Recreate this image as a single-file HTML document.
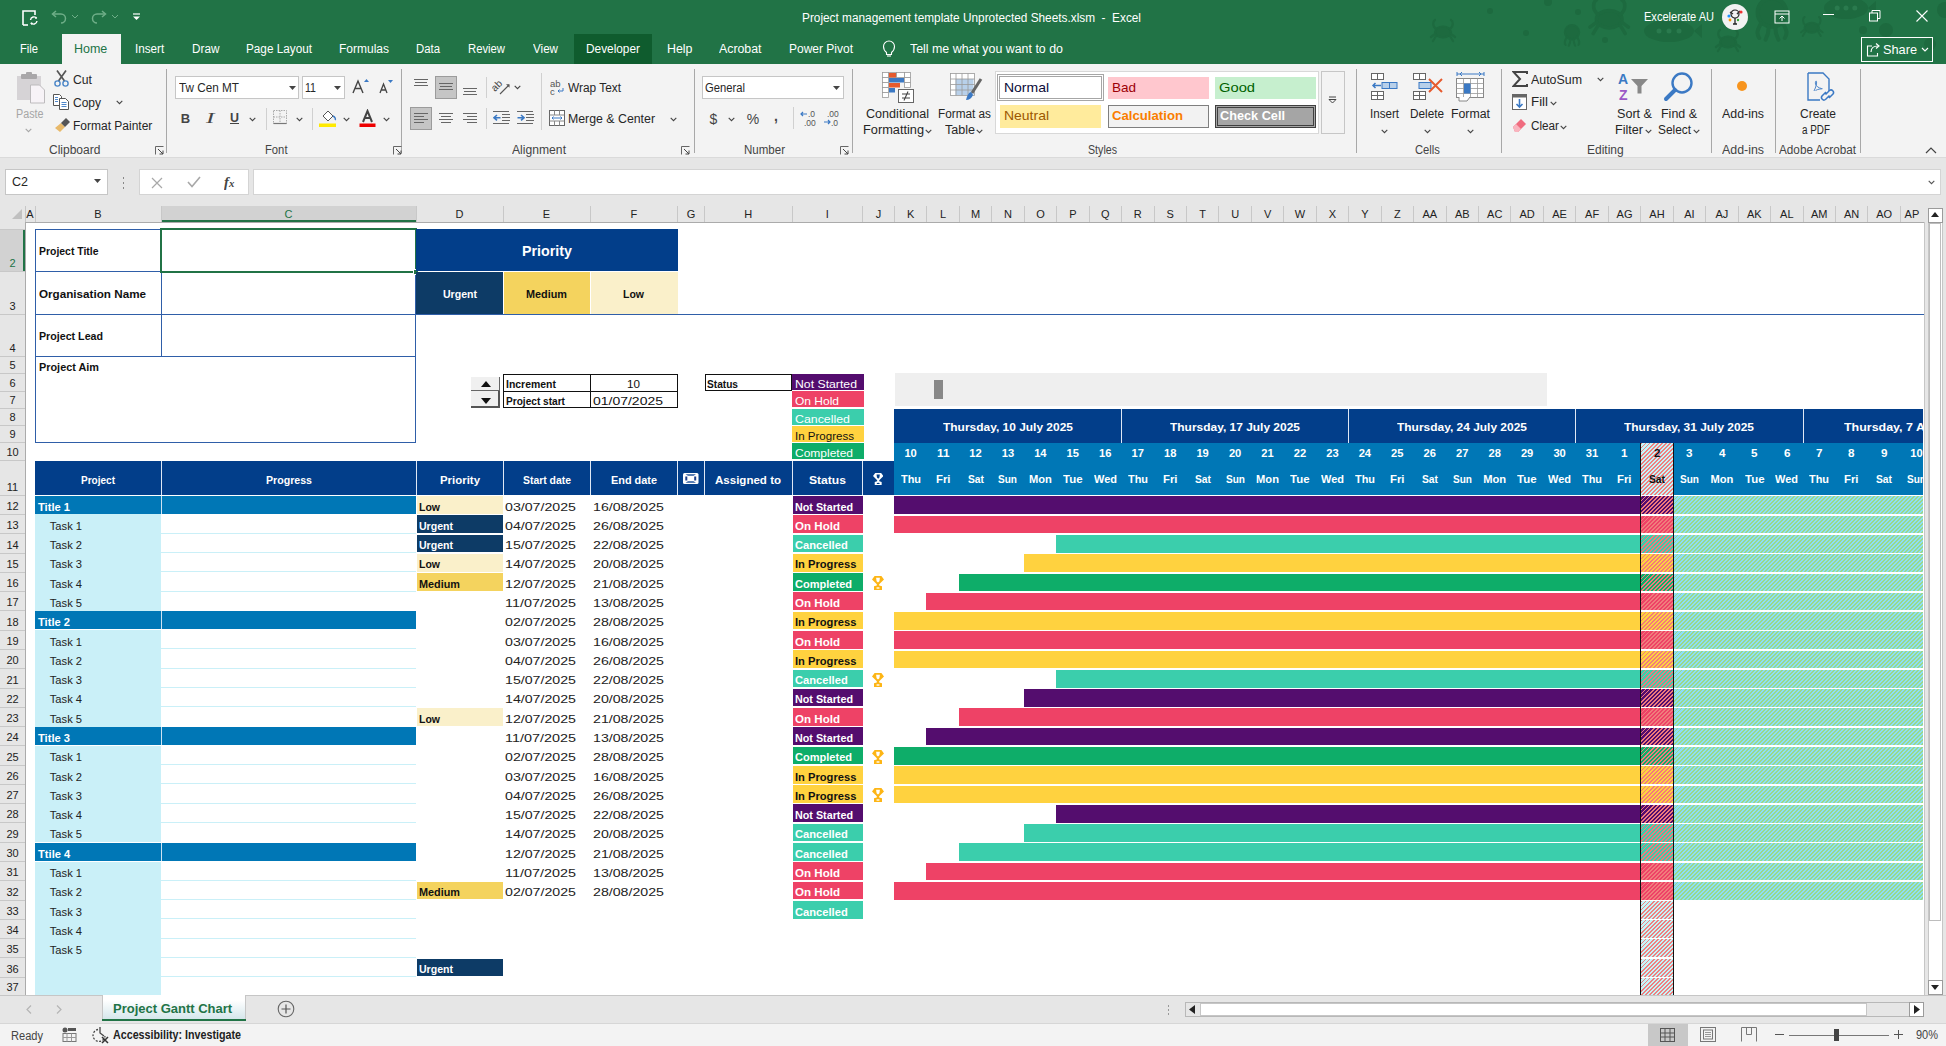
<!DOCTYPE html>
<html><head><meta charset="utf-8"><title>Excel</title><style>*{margin:0;padding:0}
html,body{width:1946px;height:1046px;overflow:hidden;background:#fff}
body{position:relative;font-family:"Liberation Sans",sans-serif}
body>div,body>svg{position:absolute}
.t{white-space:nowrap}
</style></head><body>
<div style="left:0.00px;top:0.00px;width:1946.00px;height:64.00px;background:#217346"></div>
<svg style="left:1400px;top:0px" width="546" height="64" viewBox="0 0 546 64"><g transform="translate(31,20) scale(1.0)" fill="none" stroke="#1d6a3f" stroke-width="2.2" stroke-linecap="round"><ellipse cx="12" cy="12" rx="8" ry="5.5" fill="#1d6a3f"/><path d="M5 9C1 6 2 1 4 0M19 9c4-3 3-8 1-9M4 14l-4 3M5 16l-3 5M20 14l4 3M19 16l3 5"/></g><g transform="translate(164,25) scale(0.8)" fill="#1d6a3f" stroke="#1d6a3f" stroke-width="2.5" stroke-linecap="round"><circle cx="10" cy="9" r="9"/><path d="M3 16c-2 4-3 6-1 9M8 18c0 3-1 6-2 8M12 18c0 3 1 6 2 8M17 16c2 4 3 6 1 9" fill="none"/></g><g transform="translate(190,0) scale(1.6)" fill="none" stroke="#1d6a3f" stroke-width="2.2" stroke-linecap="round"><ellipse cx="12" cy="12" rx="8" ry="5.5" fill="#1d6a3f"/><path d="M5 9C1 6 2 1 4 0M19 9c4-3 3-8 1-9M4 14l-4 3M5 16l-3 5M20 14l4 3M19 16l3 5"/></g><g><ellipse cx="269.0" cy="31.0" rx="25.0" ry="11.0" fill="#1d6a3f"/><circle cx="259.0" cy="31.0" r="2.5" fill="#2a7a4e"/><circle cx="269.0" cy="31.0" r="2.5" fill="#2a7a4e"/><circle cx="279.0" cy="31.0" r="2.5" fill="#2a7a4e"/><path d="M294 31.0l8-7v14z" fill="#1d6a3f"/></g><g transform="translate(356,-2) scale(1.6)" fill="#1d6a3f" stroke="#1d6a3f" stroke-width="2.5" stroke-linecap="round"><circle cx="10" cy="9" r="9"/><path d="M3 16c-2 4-3 6-1 9M8 18c0 3-1 6-2 8M12 18c0 3 1 6 2 8M17 16c2 4 3 6 1 9" fill="none"/></g><g transform="translate(316,30) scale(1.0)" fill="none" stroke="#1d6a3f" stroke-width="2.2" stroke-linecap="round"><ellipse cx="12" cy="12" rx="8" ry="5.5" fill="#1d6a3f"/><path d="M5 9C1 6 2 1 4 0M19 9c4-3 3-8 1-9M4 14l-4 3M5 16l-3 5M20 14l4 3M19 16l3 5"/></g><g transform="translate(401,17) scale(0.9)" fill="none" stroke="#1d6a3f" stroke-width="2.2" stroke-linecap="round"><ellipse cx="12" cy="12" rx="8" ry="5.5" fill="#1d6a3f"/><path d="M5 9C1 6 2 1 4 0M19 9c4-3 3-8 1-9M4 14l-4 3M5 16l-3 5M20 14l4 3M19 16l3 5"/></g><g><ellipse cx="446.0" cy="8.0" rx="22.0" ry="11.0" fill="#1d6a3f"/><circle cx="437.2" cy="8.0" r="2.5" fill="#2a7a4e"/><circle cx="446.0" cy="8.0" r="2.5" fill="#2a7a4e"/><circle cx="454.8" cy="8.0" r="2.5" fill="#2a7a4e"/><path d="M468 8.0l8-7v14z" fill="#1d6a3f"/></g><circle cx="90" cy="11" r="3" fill="#1d6a3f"/><circle cx="148" cy="2" r="4" fill="#1d6a3f"/><circle cx="126" cy="33" r="3" fill="#1d6a3f"/><circle cx="178" cy="12" r="3" fill="#1d6a3f"/><circle cx="463" cy="30" r="4" fill="#1d6a3f"/><circle cx="486" cy="30" r="7" fill="#1d6a3f"/><circle cx="530" cy="44" r="6" fill="#1d6a3f"/><circle cx="545" cy="10" r="8" fill="#1d6a3f"/><circle cx="205" cy="40" r="3" fill="#1d6a3f"/></svg>
<svg style="left:20px;top:8px" width="20" height="20" viewBox="0 0 20 20"><path d="M3 17V3h12v4" fill="none" stroke="#fff" stroke-width="1.6"/><path d="M3 17h5" stroke="#fff" stroke-width="1.6"/><path d="M10.5 12a3.5 3.5 0 0 1 6.2-1.8M17 13a3.5 3.5 0 0 1-6.2 1.8" fill="none" stroke="#fff" stroke-width="1.4"/><path d="M16 8.5l1 2-2.2.3z" fill="#fff"/><path d="M11.5 17l-1-2 2.2-.3z" fill="#fff"/></svg>
<svg style="left:50px;top:9px" width="18" height="16" viewBox="0 0 18 16"><path d="M3 5h8a4.5 4.5 0 0 1 0 9" fill="none" stroke="#6fae88" stroke-width="1.5"/><path d="M6 2L2.5 5 6 8" fill="none" stroke="#6fae88" stroke-width="1.5"/></svg>
<svg style="left:90px;top:9px" width="18" height="16" viewBox="0 0 18 16"><path d="M15 5H7a4.5 4.5 0 0 0 0 9" fill="none" stroke="#6fae88" stroke-width="1.5"/><path d="M12 2l3.5 3L12 8" fill="none" stroke="#6fae88" stroke-width="1.5"/></svg>
<svg style="left:71px;top:14px" width="8" height="5" viewBox="0 0 8 5"><path d="M1 1l3 3 3-3" fill="none" stroke="#6fae88" stroke-width="1"/></svg>
<svg style="left:111px;top:14px" width="8" height="5" viewBox="0 0 8 5"><path d="M1 1l3 3 3-3" fill="none" stroke="#6fae88" stroke-width="1"/></svg>
<svg style="left:132px;top:13px" width="9" height="8" viewBox="0 0 9 8"><path d="M1 1h7" stroke="#fff" stroke-width="1.2"/><path d="M1 3.5h7L4.5 7z" fill="#fff"/></svg>
<div class="t" style="left:801.50px;top:8.00px;line-height:20px;font-size:12.0px;color:#fff;font-weight:400;transform:scaleX(0.985);transform-origin:0 50%;">Project management template Unprotected Sheets.xlsm&nbsp; -&nbsp; Excel</div>
<div class="t" style="left:1644.00px;top:7.00px;line-height:20px;font-size:12.0px;color:#fff;font-weight:400;transform:scaleX(0.921);transform-origin:0 50%;">Excelerate AU</div>
<div style="left:1722.00px;top:4.00px;width:26.00px;height:26.00px;background:#f2f2f2;border-radius:50%"></div>
<svg style="left:1724px;top:6px" width="22" height="22" viewBox="0 0 22 22"><circle cx="11" cy="8" r="4" fill="none" stroke="#222" stroke-width="1.2"/><path d="M6 6l3 2M16 5l-3 3" stroke="#333" stroke-width="1.5"/><circle cx="5" cy="10" r="1.6" fill="#1e90ff"/><circle cx="17" cy="6" r="1.6" fill="#e33"/><circle cx="6" cy="14" r="1.4" fill="#f90"/><path d="M11 12v6M9 18h4" stroke="#222" stroke-width="1.3"/><circle cx="14" cy="14" r="1.2" fill="#3a3"/></svg>
<svg style="left:1774px;top:10px" width="16" height="14" viewBox="0 0 16 14"><rect x="1" y="1" width="14" height="12" fill="none" stroke="#fff" stroke-width="1"/><path d="M1 4h14" stroke="#fff"/><path d="M8 11V6M5.5 8.5L8 6l2.5 2.5" fill="none" stroke="#fff"/></svg>
<div style="left:1823.00px;top:14.00px;width:11.00px;height:1.00px;background:#fff"></div>
<svg style="left:1869px;top:10px" width="12" height="12" viewBox="0 0 12 12"><rect x="0.5" y="3" width="8" height="8" fill="none" stroke="#fff"/><path d="M3 3V0.5h8v8H8.5" fill="none" stroke="#fff"/></svg>
<svg style="left:1916px;top:10px" width="12" height="12" viewBox="0 0 12 12"><path d="M0.5 0.5l11 11M11.5 0.5l-11 11" stroke="#fff" stroke-width="1.1"/></svg>
<div style="left:62.00px;top:34.00px;width:58.50px;height:30.00px;background:#f3f3f3"></div>
<div style="left:574.00px;top:34.00px;width:78.00px;height:30.00px;background:#0f5c2e"></div>
<div class="t" style="left:20.30px;top:39.00px;line-height:20px;font-size:12.0px;color:#fff;font-weight:400;transform:scaleX(0.936);transform-origin:0 50%;">File</div>
<div class="t" style="left:74.00px;top:39.00px;line-height:20px;font-size:12.0px;color:#217346;font-weight:400;transform:scaleX(1.040);transform-origin:0 50%;">Home</div>
<div class="t" style="left:134.60px;top:39.00px;line-height:20px;font-size:12.0px;color:#fff;font-weight:400;transform:scaleX(0.973);transform-origin:0 50%;">Insert</div>
<div class="t" style="left:191.60px;top:39.00px;line-height:20px;font-size:12.0px;color:#fff;font-weight:400;transform:scaleX(0.979);transform-origin:0 50%;">Draw</div>
<div class="t" style="left:246.00px;top:39.00px;line-height:20px;font-size:12.0px;color:#fff;font-weight:400;transform:scaleX(0.979);transform-origin:0 50%;">Page Layout</div>
<div class="t" style="left:339.00px;top:39.00px;line-height:20px;font-size:12.0px;color:#fff;font-weight:400;">Formulas</div>
<div class="t" style="left:416.00px;top:39.00px;line-height:20px;font-size:12.0px;color:#fff;font-weight:400;transform:scaleX(0.947);transform-origin:0 50%;">Data</div>
<div class="t" style="left:468.00px;top:39.00px;line-height:20px;font-size:12.0px;color:#fff;font-weight:400;transform:scaleX(0.940);transform-origin:0 50%;">Review</div>
<div class="t" style="left:532.50px;top:39.00px;line-height:20px;font-size:12.0px;color:#fff;font-weight:400;transform:scaleX(0.969);transform-origin:0 50%;">View</div>
<div class="t" style="left:585.50px;top:39.00px;line-height:20px;font-size:12.0px;color:#fff;font-weight:400;transform:scaleX(0.987);transform-origin:0 50%;">Developer</div>
<div class="t" style="left:666.50px;top:39.00px;line-height:20px;font-size:12.0px;color:#fff;font-weight:400;transform:scaleX(1.033);transform-origin:0 50%;">Help</div>
<div class="t" style="left:719.00px;top:39.00px;line-height:20px;font-size:12.0px;color:#fff;font-weight:400;transform:scaleX(1.028);transform-origin:0 50%;">Acrobat</div>
<div class="t" style="left:789.00px;top:39.00px;line-height:20px;font-size:12.0px;color:#fff;font-weight:400;">Power Pivot</div>
<svg style="left:882px;top:40px" width="14" height="18" viewBox="0 0 14 18"><path d="M4.5 12.5C2 10.5 1.5 8.5 1.5 6.5a5.5 5.5 0 0 1 11 0c0 2-0.5 4-3 6v2h-5z" fill="none" stroke="#fff" stroke-width="1.1"/><path d="M5 16h4" stroke="#fff" stroke-width="1.1"/></svg>
<div class="t" style="left:910.00px;top:39.00px;line-height:20px;font-size:12.0px;color:#fff;font-weight:400;transform:scaleX(1.033);transform-origin:0 50%;">Tell me what you want to do</div>
<div style="left:1861.00px;top:37.00px;width:72.00px;height:25.00px;border:1px solid #fff;box-sizing:border-box"></div>
<svg style="left:1866px;top:42px" width="16" height="15" viewBox="0 0 16 15"><path d="M6 4H1.5v10h10v-3" fill="none" stroke="#fff" stroke-width="1.1"/><path d="M5 10c0-4 3-6 7-6" fill="none" stroke="#fff" stroke-width="1.2"/><path d="M10 1.5l3 2.5-3 2.5" fill="none" stroke="#fff" stroke-width="1.2"/></svg>
<div class="t" style="left:1883.00px;top:39.50px;line-height:20px;font-size:13.0px;color:#fff;font-weight:400;transform:scaleX(0.980);transform-origin:0 50%;">Share</div>
<svg style="left:1921px;top:47px" width="8" height="5" viewBox="0 0 8 5"><path d="M1 1l3 3 3-3" fill="none" stroke="#fff" stroke-width="1.1"/></svg>
<div style="left:0.00px;top:64.00px;width:1946.00px;height:94.00px;background:#f3f3f3"></div>
<div style="left:0.00px;top:157.00px;width:1946.00px;height:1.00px;background:#dadada"></div>
<div style="left:166.00px;top:69.00px;width:1.00px;height:84.00px;background:#a8a8a8"></div>
<div style="left:401.00px;top:69.00px;width:1.00px;height:84.00px;background:#a8a8a8"></div>
<div style="left:694.00px;top:69.00px;width:1.00px;height:84.00px;background:#a8a8a8"></div>
<div style="left:851.50px;top:69.00px;width:1.00px;height:84.00px;background:#a8a8a8"></div>
<div style="left:1355.50px;top:69.00px;width:1.00px;height:84.00px;background:#a8a8a8"></div>
<div style="left:1500.70px;top:69.00px;width:1.00px;height:84.00px;background:#a8a8a8"></div>
<div style="left:1711.40px;top:69.00px;width:1.00px;height:84.00px;background:#a8a8a8"></div>
<div style="left:1775.00px;top:69.00px;width:1.00px;height:84.00px;background:#a8a8a8"></div>
<div style="left:1860.00px;top:69.00px;width:1.00px;height:84.00px;background:#a8a8a8"></div>
<div class="t" style="left:49.00px;top:139.50px;line-height:20px;font-size:12.0px;color:#444;font-weight:400;">Clipboard</div>
<div class="t" style="left:264.50px;top:139.50px;line-height:20px;font-size:12.0px;color:#444;font-weight:400;transform:scaleX(0.937);transform-origin:0 50%;">Font</div>
<div class="t" style="left:512.00px;top:139.50px;line-height:20px;font-size:12.0px;color:#444;font-weight:400;transform:scaleX(1.012);transform-origin:0 50%;">Alignment</div>
<div class="t" style="left:744.00px;top:139.50px;line-height:20px;font-size:12.0px;color:#444;font-weight:400;transform:scaleX(0.961);transform-origin:0 50%;">Number</div>
<div class="t" style="left:1088.00px;top:139.50px;line-height:20px;font-size:12.0px;color:#444;font-weight:400;transform:scaleX(0.887);transform-origin:0 50%;">Styles</div>
<div class="t" style="left:1415.00px;top:139.50px;line-height:20px;font-size:12.0px;color:#444;font-weight:400;transform:scaleX(0.937);transform-origin:0 50%;">Cells</div>
<div class="t" style="left:1587.00px;top:139.50px;line-height:20px;font-size:12.0px;color:#444;font-weight:400;">Editing</div>
<div class="t" style="left:1722.00px;top:139.50px;line-height:20px;font-size:12.0px;color:#444;font-weight:400;transform:scaleX(1.032);transform-origin:0 50%;">Add-ins</div>
<div class="t" style="left:1779.00px;top:139.50px;line-height:20px;font-size:12.0px;color:#444;font-weight:400;transform:scaleX(0.978);transform-origin:0 50%;">Adobe Acrobat</div>
<svg style="left:155px;top:145.5px" width="9" height="9" viewBox="0 0 9 9"><path d="M0.5 8.5V0.5h8" fill="none" stroke="#666"/><path d="M3 3l5 5M4.5 8h3.5V4.5" fill="none" stroke="#444"/></svg>
<svg style="left:393px;top:145.5px" width="9" height="9" viewBox="0 0 9 9"><path d="M0.5 8.5V0.5h8" fill="none" stroke="#666"/><path d="M3 3l5 5M4.5 8h3.5V4.5" fill="none" stroke="#444"/></svg>
<svg style="left:681px;top:145.5px" width="9" height="9" viewBox="0 0 9 9"><path d="M0.5 8.5V0.5h8" fill="none" stroke="#666"/><path d="M3 3l5 5M4.5 8h3.5V4.5" fill="none" stroke="#444"/></svg>
<svg style="left:840px;top:145.5px" width="9" height="9" viewBox="0 0 9 9"><path d="M0.5 8.5V0.5h8" fill="none" stroke="#666"/><path d="M3 3l5 5M4.5 8h3.5V4.5" fill="none" stroke="#444"/></svg>
<svg style="left:16px;top:72px" width="30" height="32" viewBox="0 0 30 32"><rect x="1" y="4" width="24" height="24" fill="#d6d3d6"/><rect x="5" y="2" width="16" height="5" rx="1" fill="#a9a7a9"/><rect x="10" y="0" width="6" height="3" rx="1" fill="#a9a7a9"/><path d="M14.5 13h9l5 5v13h-14z" fill="#f7f3f7" stroke="#bdbbbd" stroke-width="1"/></svg>
<div class="t" style="left:15.55px;top:104.00px;line-height:20px;font-size:12.0px;color:#a6a6a6;font-weight:400;transform:scaleX(0.896);transform-origin:0 50%;">Paste</div>
<svg style="left:25.0px;top:127.5px" width="7" height="5" viewBox="0 0 7 5"><path d="M0.7 0.8l2.8 2.8 2.8-2.8" fill="none" stroke="#a6a6a6" stroke-width="1.1"/></svg>
<svg style="left:53px;top:70px" width="17" height="17" viewBox="0 0 17 17"><path d="M4 0.5L11.5 11M13 0.5L5.5 11" stroke="#555" stroke-width="1.7"/><circle cx="4.5" cy="13.5" r="2.6" fill="none" stroke="#4a86c8" stroke-width="1.4"/><circle cx="12.5" cy="13.5" r="2.6" fill="none" stroke="#4a86c8" stroke-width="1.4"/></svg>
<div class="t" style="left:73.00px;top:69.50px;line-height:20px;font-size:12.0px;color:#262626;font-weight:400;transform:scaleX(1.018);transform-origin:0 50%;">Cut</div>
<svg style="left:53px;top:94px" width="17" height="16" viewBox="0 0 17 16"><path d="M0.5 0.5h6l2 2v9h-8z" fill="#fff" stroke="#555"/><path d="M6.5 4.5h6l3 3v8h-9z" fill="#fff" stroke="#555"/><path d="M2 3.5h3M2 5.5h3M2 7.5h3M8.5 8.5h5M8.5 10.5h5M8.5 12.5h5" stroke="#3b79c4" stroke-width="0.9"/></svg>
<div class="t" style="left:73.00px;top:93.00px;line-height:20px;font-size:12.0px;color:#262626;font-weight:400;">Copy</div>
<svg style="left:116.0px;top:100px" width="7" height="5" viewBox="0 0 7 5"><path d="M0.7 0.8l2.8 2.8 2.8-2.8" fill="none" stroke="#444" stroke-width="1.1"/></svg>
<svg style="left:54px;top:117px" width="17" height="16" viewBox="0 0 17 16"><path d="M1 11l6-5 4 4-5 5z" fill="#e8b96a"/><path d="M7 6l5-5 4 4-5 5z" fill="#555"/></svg>
<div class="t" style="left:73.00px;top:115.50px;line-height:20px;font-size:12.0px;color:#262626;font-weight:400;">Format Painter</div>
<div style="left:175.00px;top:76.00px;width:124.00px;height:23.00px;background:#fff;border:1px solid #c6c6c6;box-sizing:border-box"></div>
<div class="t" style="left:179.00px;top:77.50px;line-height:20px;font-size:12.0px;color:#262626;font-weight:400;transform:scaleX(0.978);transform-origin:0 50%;">Tw Cen MT</div>
<svg style="left:288.5px;top:85.5px" width="7" height="4" viewBox="0 0 7 4"><path d="M0 0h7L3.5 4z" fill="#444"/></svg>
<div style="left:302.00px;top:76.00px;width:43.00px;height:23.00px;background:#fff;border:1px solid #c6c6c6;box-sizing:border-box"></div>
<div class="t" style="left:305.00px;top:77.50px;line-height:20px;font-size:12.0px;color:#262626;font-weight:400;transform:scaleX(0.883);transform-origin:0 50%;">11</div>
<svg style="left:333.5px;top:85.5px" width="7" height="4" viewBox="0 0 7 4"><path d="M0 0h7L3.5 4z" fill="#444"/></svg>
<svg style="left:352px;top:78px" width="18" height="16" viewBox="0 0 18 16"><path d="M1 15L6 3l5 12M3 10.5h6" fill="none" stroke="#444" stroke-width="1.4"/><path d="M12 4l2.5-3 2.5 3z" fill="#3b79c4"/></svg>
<svg style="left:378px;top:78px" width="16" height="16" viewBox="0 0 16 16"><path d="M2 15L5.5 6 9 15M3.3 12h4.4" fill="none" stroke="#444" stroke-width="1.3"/><path d="M10 2h5l-2.5 3z" fill="#3b79c4"/></svg>
<div class="t" style="left:180.81px;top:108.50px;line-height:20px;font-size:13.0px;color:#444;font-weight:700;">B</div>
<div class="t" style="left:206.00px;top:108.50px;line-height:20px;font-size:14.0px;color:#444;font-weight:400;transform:scaleX(1.800);transform-origin:0 50%;font-family:&quot;Liberation Serif&quot;,serif"><i>I</i></div>
<div class="t" style="left:229.50px;top:108.00px;line-height:20px;font-size:13.0px;color:#444;font-weight:700;transform:scaleX(0.959);transform-origin:0 50%;"><u>U</u></div>
<svg style="left:248.5px;top:116.5px" width="7" height="5" viewBox="0 0 7 5"><path d="M0.7 0.8l2.8 2.8 2.8-2.8" fill="none" stroke="#444" stroke-width="1.1"/></svg>
<div style="left:266.00px;top:108.00px;width:1.00px;height:22.00px;background:#d0d0d0"></div>
<svg style="left:273px;top:110px" width="15" height="15" viewBox="0 0 15 15"><rect x="0.5" y="0.5" width="13" height="13" fill="none" stroke="#aaa" stroke-dasharray="1.5 1"/><path d="M7 0.5v13M0.5 7h13" stroke="#aaa" stroke-dasharray="1.5 1"/><path d="M0.5 13.5h13" stroke="#777" stroke-width="1.2"/></svg>
<svg style="left:295.5px;top:116.5px" width="7" height="5" viewBox="0 0 7 5"><path d="M0.7 0.8l2.8 2.8 2.8-2.8" fill="none" stroke="#444" stroke-width="1.1"/></svg>
<div style="left:312.00px;top:108.00px;width:1.00px;height:22.00px;background:#d0d0d0"></div>
<svg style="left:319px;top:109px" width="19" height="19" viewBox="0 0 19 19"><path d="M4 7l5-5 5 5-5 5z" fill="#fff" stroke="#555"/><path d="M14 7c2 1 3 3 2 4" fill="none" stroke="#3b79c4" stroke-width="1.5"/><rect x="0" y="14.5" width="17" height="3.5" fill="#ffea00"/></svg>
<svg style="left:342.5px;top:116.5px" width="7" height="5" viewBox="0 0 7 5"><path d="M0.7 0.8l2.8 2.8 2.8-2.8" fill="none" stroke="#444" stroke-width="1.1"/></svg>
<svg style="left:359px;top:109px" width="18" height="19" viewBox="0 0 18 19"><path d="M4 13L8.5 2 13 13M5.8 9h5.4" fill="none" stroke="#444" stroke-width="2"/><rect x="0.5" y="14.5" width="16" height="3.5" fill="#e00"/></svg>
<svg style="left:382.5px;top:116.5px" width="7" height="5" viewBox="0 0 7 5"><path d="M0.7 0.8l2.8 2.8 2.8-2.8" fill="none" stroke="#444" stroke-width="1.1"/></svg>
<div style="left:434.70px;top:76.00px;width:22.00px;height:22.50px;background:#c5c5c5;border:1px solid #9b9b9b;box-sizing:border-box"></div>
<div style="left:410.00px;top:107.00px;width:22.40px;height:23.00px;background:#c5c5c5;border:1px solid #9b9b9b;box-sizing:border-box"></div>
<div style="left:414.00px;top:79.00px;width:14.00px;height:1.20px;background:#666"></div>
<div style="left:414.00px;top:85.00px;width:14.00px;height:1.20px;background:#666"></div>
<div style="left:415.00px;top:82.00px;width:12.00px;height:1.20px;background:#666"></div>
<div style="left:439.00px;top:83.00px;width:14.00px;height:1.20px;background:#666"></div>
<div style="left:439.00px;top:89.00px;width:14.00px;height:1.20px;background:#666"></div>
<div style="left:440.00px;top:86.00px;width:12.00px;height:1.20px;background:#666"></div>
<div style="left:463.00px;top:88.00px;width:14.00px;height:1.20px;background:#666"></div>
<div style="left:463.00px;top:94.00px;width:14.00px;height:1.20px;background:#666"></div>
<div style="left:464.00px;top:91.00px;width:12.00px;height:1.20px;background:#666"></div>
<div style="left:414.00px;top:113.00px;width:14.00px;height:1.20px;background:#666"></div>
<div style="left:439.00px;top:113.00px;width:14.00px;height:1.20px;background:#666"></div>
<div style="left:463.00px;top:113.00px;width:14.00px;height:1.20px;background:#666"></div>
<div style="left:414.00px;top:116.00px;width:10.00px;height:1.20px;background:#666"></div>
<div style="left:441.00px;top:116.00px;width:10.00px;height:1.20px;background:#666"></div>
<div style="left:467.00px;top:116.00px;width:10.00px;height:1.20px;background:#666"></div>
<div style="left:414.00px;top:119.00px;width:14.00px;height:1.20px;background:#666"></div>
<div style="left:439.00px;top:119.00px;width:14.00px;height:1.20px;background:#666"></div>
<div style="left:463.00px;top:119.00px;width:14.00px;height:1.20px;background:#666"></div>
<div style="left:414.00px;top:122.00px;width:10.00px;height:1.20px;background:#666"></div>
<div style="left:441.00px;top:122.00px;width:10.00px;height:1.20px;background:#666"></div>
<div style="left:467.00px;top:122.00px;width:10.00px;height:1.20px;background:#666"></div>
<div style="left:485.60px;top:77.00px;width:1.00px;height:21.00px;background:#d0d0d0"></div>
<div style="left:485.60px;top:108.00px;width:1.00px;height:21.00px;background:#d0d0d0"></div>
<svg style="left:492px;top:78px" width="20" height="18" viewBox="0 0 20 18"><text x="0" y="0" font-size="10" font-family="Liberation Sans" fill="#444" transform="translate(3,14) rotate(-45)">ab</text><path d="M8 16L17 7" stroke="#555" stroke-width="1.1"/><path d="M14 6.3h3.5v3.5z" fill="#555"/></svg>
<svg style="left:513.5px;top:85px" width="7" height="5" viewBox="0 0 7 5"><path d="M0.7 0.8l2.8 2.8 2.8-2.8" fill="none" stroke="#444" stroke-width="1.1"/></svg>
<div style="left:493.00px;top:111.00px;width:16.00px;height:1.20px;background:#666"></div>
<div style="left:493.00px;top:123.00px;width:16.00px;height:1.20px;background:#666"></div>
<div style="left:502.00px;top:114.00px;width:8.00px;height:1.20px;background:#666"></div>
<div style="left:502.00px;top:117.00px;width:8.00px;height:1.20px;background:#666"></div>
<div style="left:502.00px;top:120.00px;width:8.00px;height:1.20px;background:#666"></div>
<svg style="left:493px;top:113.5px" width="8" height="8" viewBox="0 0 8 8"><path d="M7.5 3.7H2M4 1L1 3.7 4 6.4" fill="none" stroke="#3b79c4" stroke-width="1.6"/></svg>
<div style="left:517.00px;top:111.00px;width:16.00px;height:1.20px;background:#666"></div>
<div style="left:517.00px;top:123.00px;width:16.00px;height:1.20px;background:#666"></div>
<div style="left:526.00px;top:114.00px;width:8.00px;height:1.20px;background:#666"></div>
<div style="left:526.00px;top:117.00px;width:8.00px;height:1.20px;background:#666"></div>
<div style="left:526.00px;top:120.00px;width:8.00px;height:1.20px;background:#666"></div>
<svg style="left:517px;top:113.5px" width="8" height="8" viewBox="0 0 8 8"><path d="M0.5 3.7H6M4 1l3 2.7L4 6.4" fill="none" stroke="#3b79c4" stroke-width="1.6"/></svg>
<div style="left:541.30px;top:73.00px;width:1.00px;height:57.00px;background:#d0d0d0"></div>
<svg style="left:550px;top:80px" width="15" height="15" viewBox="0 0 15 15"><text x="0" y="7" font-size="9.5" font-family="Liberation Sans" fill="#555">ab</text><text x="0" y="15" font-size="9.5" font-family="Liberation Sans" fill="#555">c</text><path d="M13 8v3h-5M9.5 9.5L8 11l1.5 1.5" fill="none" stroke="#3b79c4"/></svg>
<div class="t" style="left:568.00px;top:78.00px;line-height:20px;font-size:12.0px;color:#262626;font-weight:400;transform:scaleX(0.989);transform-origin:0 50%;">Wrap Text</div>
<svg style="left:549px;top:110px" width="16" height="16" viewBox="0 0 16 16"><rect x="0.5" y="0.5" width="15" height="15" fill="#fff" stroke="#666"/><path d="M0.5 5h15M0.5 11h15M5.5 0.5v4.5M10.5 0.5v4.5M5.5 11v4.5M10.5 11v4.5" stroke="#888"/><path d="M3 8h10M4.5 6.5L3 8l1.5 1.5M11.5 6.5L13 8l-1.5 1.5" fill="none" stroke="#3b79c4"/></svg>
<div class="t" style="left:568.00px;top:109.00px;line-height:20px;font-size:12.0px;color:#262626;font-weight:400;transform:scaleX(1.027);transform-origin:0 50%;">Merge &amp; Center</div>
<svg style="left:669.5px;top:116.5px" width="7" height="5" viewBox="0 0 7 5"><path d="M0.7 0.8l2.8 2.8 2.8-2.8" fill="none" stroke="#444" stroke-width="1.1"/></svg>
<div style="left:702.00px;top:76.00px;width:141.70px;height:22.50px;background:#fff;border:1px solid #c6c6c6;box-sizing:border-box"></div>
<div class="t" style="left:705.00px;top:77.50px;line-height:20px;font-size:12.0px;color:#262626;font-weight:400;transform:scaleX(0.937);transform-origin:0 50%;">General</div>
<svg style="left:832.5px;top:85.5px" width="7" height="4" viewBox="0 0 7 4"><path d="M0 0h7L3.5 4z" fill="#444"/></svg>
<div class="t" style="left:709.61px;top:108.50px;line-height:20px;font-size:14.0px;color:#444;font-weight:400;">$</div>
<svg style="left:727.5px;top:116.5px" width="7" height="5" viewBox="0 0 7 5"><path d="M0.7 0.8l2.8 2.8 2.8-2.8" fill="none" stroke="#444" stroke-width="1.1"/></svg>
<div class="t" style="left:746.78px;top:108.50px;line-height:20px;font-size:14.0px;color:#444;font-weight:400;">%</div>
<div class="t" style="left:774.06px;top:106.00px;line-height:20px;font-size:14.0px;color:#444;font-weight:700;">,</div>
<div style="left:793.00px;top:107.00px;width:1.00px;height:22.00px;background:#d0d0d0"></div>
<svg style="left:800px;top:109px" width="18" height="18" viewBox="0 0 18 18"><text x="8" y="8" font-size="8.5" font-family="Liberation Sans" fill="#555">.0</text><text x="4" y="16.5" font-size="8.5" font-family="Liberation Sans" fill="#555">.00</text><path d="M7 5H1M3 3L1 5l2 2" fill="none" stroke="#3b79c4" stroke-width="1.2"/></svg>
<svg style="left:823px;top:109px" width="18" height="18" viewBox="0 0 18 18"><text x="4" y="8" font-size="8.5" font-family="Liberation Sans" fill="#555">.00</text><text x="8" y="16.5" font-size="8.5" font-family="Liberation Sans" fill="#555">.0</text><path d="M1 13h6M5 11l2 2-2 2" fill="none" stroke="#3b79c4" stroke-width="1.2"/></svg>
<svg style="left:882px;top:72px" width="33" height="32" viewBox="0 0 33 32"><g fill="#fff" stroke="#999" stroke-width="0.8"><rect x="0.5" y="0.5" width="6" height="5"/><rect x="6.5" y="0.5" width="8" height="5"/><rect x="14.5" y="0.5" width="8" height="5"/><rect x="22.5" y="0.5" width="6" height="5"/><rect x="0.5" y="5.5" width="6" height="5"/><rect x="22.5" y="5.5" width="6" height="5"/><rect x="0.5" y="10.5" width="6" height="5"/><rect x="22.5" y="10.5" width="6" height="5"/><rect x="0.5" y="15.5" width="6" height="5"/><rect x="0.5" y="20.5" width="6" height="5"/></g><rect x="7" y="1" width="7" height="4.5" fill="#e65a2e"/><rect x="7" y="6" width="15" height="4.5" fill="#3b79c4"/><rect x="7" y="11" width="11" height="4.5" fill="#e65a2e"/><rect x="7" y="16" width="6" height="4.5" fill="#3b79c4"/><rect x="16.5" y="17.5" width="15" height="13" fill="#fff" stroke="#666"/><path d="M20 22h8M20 26h8M26 19.5l-4 9" stroke="#444" stroke-width="1.1"/></svg>
<div class="t" style="left:866.00px;top:104.00px;line-height:20px;font-size:12.0px;color:#262626;font-weight:400;transform:scaleX(1.049);transform-origin:0 50%;">Conditional</div>
<div class="t" style="left:862.50px;top:120.00px;line-height:20px;font-size:12.0px;color:#262626;font-weight:400;transform:scaleX(1.064);transform-origin:0 50%;">Formatting</div>
<svg style="left:924.5px;top:128.5px" width="7" height="5" viewBox="0 0 7 5"><path d="M0.7 0.8l2.8 2.8 2.8-2.8" fill="none" stroke="#444" stroke-width="1.1"/></svg>
<svg style="left:950px;top:73px" width="33" height="31" viewBox="0 0 33 31"><g fill="#fff" stroke="#999" stroke-width="0.8"><rect x="0.5" y="0.5" width="24" height="22"/></g><rect x="5.5" y="6" width="18" height="16" fill="#b8d0ea"/><path d="M0.5 6h24M0.5 11.5h24M0.5 17h24M6 0.5v22M12 0.5v22M18 0.5v22" stroke="#999" stroke-width="0.8"/><path d="M31 6L22 20" stroke="#666" stroke-width="3"/><path d="M21 19c-3 1-4 4-5 8 3 0 6-2 7-5z" fill="#3b79c4"/></svg>
<div class="t" style="left:938.00px;top:104.00px;line-height:20px;font-size:12.0px;color:#262626;font-weight:400;transform:scaleX(0.981);transform-origin:0 50%;">Format as</div>
<div class="t" style="left:945.00px;top:120.00px;line-height:20px;font-size:12.0px;color:#262626;font-weight:400;transform:scaleX(1.046);transform-origin:0 50%;">Table</div>
<svg style="left:975.5px;top:128.5px" width="7" height="5" viewBox="0 0 7 5"><path d="M0.7 0.8l2.8 2.8 2.8-2.8" fill="none" stroke="#444" stroke-width="1.1"/></svg>
<div style="left:995.40px;top:71.00px;width:324.00px;height:62.50px;background:#fff;border:1px solid #d8d8d8;box-sizing:border-box"></div>
<div style="left:997.30px;top:74.40px;width:107.00px;height:27.00px;background:#fff;border:3px double #a6a6a6;box-sizing:border-box"></div>
<div class="t" style="left:1004.00px;top:78.00px;line-height:20px;font-size:13.0px;color:#0a0a38;font-weight:400;transform:scaleX(1.074);transform-origin:0 50%;">Normal</div>
<div style="left:1107.60px;top:77.00px;width:101.00px;height:22.00px;background:#ffc7ce"></div>
<div class="t" style="left:1112.00px;top:78.00px;line-height:20px;font-size:13.0px;color:#9c0006;font-weight:400;transform:scaleX(1.038);transform-origin:0 50%;">Bad</div>
<div style="left:1214.60px;top:77.00px;width:101.40px;height:22.00px;background:#c6efce"></div>
<div class="t" style="left:1219.00px;top:78.00px;line-height:20px;font-size:13.0px;color:#006100;font-weight:400;transform:scaleX(1.132);transform-origin:0 50%;">Good</div>
<div style="left:1000.00px;top:105.00px;width:101.00px;height:22.50px;background:#ffeb9c"></div>
<div class="t" style="left:1004.00px;top:106.00px;line-height:20px;font-size:13.0px;color:#9c5700;font-weight:400;transform:scaleX(1.074);transform-origin:0 50%;">Neutral</div>
<div style="left:1107.60px;top:105.00px;width:101.00px;height:23.00px;background:#f2f2f2;border:1px solid #7f7f7f;box-sizing:border-box"></div>
<div class="t" style="left:1112.00px;top:106.00px;line-height:20px;font-size:13.0px;color:#fa7d00;font-weight:700;transform:scaleX(1.013);transform-origin:0 50%;">Calculation</div>
<div style="left:1214.60px;top:105.00px;width:101.40px;height:23.00px;background:#a5a5a5;border:3px double #3f3f3f;box-sizing:border-box"></div>
<div class="t" style="left:1220.00px;top:106.00px;line-height:20px;font-size:13.0px;color:#fff;font-weight:700;transform:scaleX(0.978);transform-origin:0 50%;">Check Cell</div>
<div style="left:1321.00px;top:71.00px;width:23.50px;height:62.50px;background:#f3f3f3;border:1px solid #c6c6c6;box-sizing:border-box"></div>
<svg style="left:1328px;top:96px" width="9" height="8" viewBox="0 0 9 8"><path d="M1 1h7" stroke="#444"/><path d="M1 3.5h7L4.5 7z" fill="none" stroke="#444"/></svg>
<svg style="left:1370px;top:72px" width="30" height="30" viewBox="0 0 30 30"><g fill="#fff" stroke="#666" stroke-width="1"><rect x="1.5" y="1.5" width="12" height="6"/><rect x="13.5" y="1.5" width="0" height="0"/><rect x="1.5" y="19.5" width="12" height="8"/></g><path d="M1.5 23.5h12M7.5 19.5v8M7.5 1.5v6" stroke="#666"/><rect x="12" y="10.5" width="15" height="6" fill="#b8d0ea" stroke="#3b79c4"/><path d="M19.5 10.5v6" stroke="#3b79c4"/><path d="M11 13.5H3M5.5 11L3 13.5 5.5 16" fill="none" stroke="#3b79c4" stroke-width="1.5"/></svg>
<div class="t" style="left:1370.00px;top:104.00px;line-height:20px;font-size:12.0px;color:#262626;font-weight:400;transform:scaleX(0.966);transform-origin:0 50%;">Insert</div>
<svg style="left:1381.0px;top:128.5px" width="7" height="5" viewBox="0 0 7 5"><path d="M0.7 0.8l2.8 2.8 2.8-2.8" fill="none" stroke="#444" stroke-width="1.1"/></svg>
<svg style="left:1412px;top:72px" width="32" height="30" viewBox="0 0 32 30"><g fill="#fff" stroke="#666" stroke-width="1"><rect x="1.5" y="1.5" width="12" height="6"/><rect x="1.5" y="19.5" width="12" height="8"/></g><path d="M1.5 23.5h12M7.5 19.5v8M7.5 1.5v6" stroke="#666"/><rect x="7" y="10.5" width="12" height="6" fill="#b8d0ea" stroke="#3b79c4"/><path d="M17 7l13 13M30 7L17 20" stroke="#e65a2e" stroke-width="2"/></svg>
<div class="t" style="left:1410.00px;top:104.00px;line-height:20px;font-size:12.0px;color:#262626;font-weight:400;transform:scaleX(0.980);transform-origin:0 50%;">Delete</div>
<svg style="left:1423.5px;top:128.5px" width="7" height="5" viewBox="0 0 7 5"><path d="M0.7 0.8l2.8 2.8 2.8-2.8" fill="none" stroke="#444" stroke-width="1.1"/></svg>
<svg style="left:1455px;top:71px" width="31" height="32" viewBox="0 0 31 32"><path d="M2 3h27M2 1v4M29 1v4M5 3l2-2M5 3l2 2M26 3l-2-2M26 3l-2 2" fill="none" stroke="#3b79c4" stroke-width="1"/><rect x="1.5" y="7.5" width="27" height="19" fill="#fff" stroke="#888"/><path d="M1.5 12.5h27M1.5 17.5h27M1.5 22.5h27M8.5 7.5v19M15.5 7.5v19M22.5 7.5v19" stroke="#999" stroke-width="0.8"/><rect x="9" y="12.5" width="6.5" height="10" fill="#3b79c4"/><path d="M4 26v4h8l3-4" fill="#fff" stroke="#888"/></svg>
<div class="t" style="left:1451.00px;top:104.00px;line-height:20px;font-size:12.0px;color:#262626;font-weight:400;transform:scaleX(1.026);transform-origin:0 50%;">Format</div>
<svg style="left:1467.0px;top:128.5px" width="7" height="5" viewBox="0 0 7 5"><path d="M0.7 0.8l2.8 2.8 2.8-2.8" fill="none" stroke="#444" stroke-width="1.1"/></svg>
<svg style="left:1512px;top:71px" width="16" height="16" viewBox="0 0 16 16"><path d="M15 3V1H1.5L8 8 1.5 15H15v-2" fill="none" stroke="#444" stroke-width="2"/></svg>
<div class="t" style="left:1531.00px;top:69.50px;line-height:20px;font-size:12.0px;color:#262626;font-weight:400;transform:scaleX(1.033);transform-origin:0 50%;">AutoSum</div>
<svg style="left:1596.5px;top:77px" width="7" height="5" viewBox="0 0 7 5"><path d="M0.7 0.8l2.8 2.8 2.8-2.8" fill="none" stroke="#444" stroke-width="1.1"/></svg>
<svg style="left:1512px;top:94px" width="16" height="16" viewBox="0 0 16 16"><rect x="0.5" y="0.5" width="14" height="15" fill="#fff" stroke="#666"/><rect x="0.5" y="0.5" width="14" height="3" fill="#666"/><path d="M7.5 5v8M4.5 10l3 3 3-3" fill="none" stroke="#3b79c4" stroke-width="1.6"/></svg>
<div class="t" style="left:1531.00px;top:92.00px;line-height:20px;font-size:12.0px;color:#262626;font-weight:400;transform:scaleX(1.109);transform-origin:0 50%;">Fill</div>
<svg style="left:1549.5px;top:100.5px" width="7" height="5" viewBox="0 0 7 5"><path d="M0.7 0.8l2.8 2.8 2.8-2.8" fill="none" stroke="#444" stroke-width="1.1"/></svg>
<svg style="left:1512px;top:117px" width="16" height="15" viewBox="0 0 16 15"><path d="M1 10l8-8 5 5-8 8H3z" fill="#f06c7f"/><path d="M1 10l3-3 5 5-3 3H3z" fill="#f9b4be"/></svg>
<div class="t" style="left:1531.00px;top:116.00px;line-height:20px;font-size:12.0px;color:#262626;font-weight:400;transform:scaleX(0.976);transform-origin:0 50%;">Clear</div>
<svg style="left:1559.5px;top:124.5px" width="7" height="5" viewBox="0 0 7 5"><path d="M0.7 0.8l2.8 2.8 2.8-2.8" fill="none" stroke="#444" stroke-width="1.1"/></svg>
<svg style="left:1617px;top:71px" width="34" height="32" viewBox="0 0 34 32"><text x="1" y="13" font-size="14" font-weight="700" font-family="Liberation Sans" fill="#3b79c4">A</text><text x="2" y="29" font-size="14" font-weight="700" font-family="Liberation Sans" fill="#9b59c6">Z</text><path d="M14 8h17l-6.5 7v7.5h-4V15z" fill="#888"/></svg>
<div class="t" style="left:1617.00px;top:104.00px;line-height:20px;font-size:12.0px;color:#262626;font-weight:400;transform:scaleX(1.050);transform-origin:0 50%;">Sort &amp;</div>
<div class="t" style="left:1615.00px;top:120.00px;line-height:20px;font-size:12.0px;color:#262626;font-weight:400;transform:scaleX(1.050);transform-origin:0 50%;">Filter</div>
<svg style="left:1644.5px;top:128.5px" width="7" height="5" viewBox="0 0 7 5"><path d="M0.7 0.8l2.8 2.8 2.8-2.8" fill="none" stroke="#444" stroke-width="1.1"/></svg>
<svg style="left:1663px;top:71px" width="32" height="32" viewBox="0 0 32 32"><circle cx="19" cy="12" r="9.5" fill="none" stroke="#3b79c4" stroke-width="2.4"/><path d="M12 19L3 28" stroke="#3b79c4" stroke-width="4" stroke-linecap="round"/></svg>
<div class="t" style="left:1661.00px;top:104.00px;line-height:20px;font-size:12.0px;color:#262626;font-weight:400;transform:scaleX(1.038);transform-origin:0 50%;">Find &amp;</div>
<div class="t" style="left:1658.00px;top:120.00px;line-height:20px;font-size:12.0px;color:#262626;font-weight:400;transform:scaleX(0.989);transform-origin:0 50%;">Select</div>
<svg style="left:1692.5px;top:128.5px" width="7" height="5" viewBox="0 0 7 5"><path d="M0.7 0.8l2.8 2.8 2.8-2.8" fill="none" stroke="#444" stroke-width="1.1"/></svg>
<div style="left:1737.00px;top:81.00px;width:10.00px;height:10.00px;background:#f7941d;border-radius:50%"></div>
<div class="t" style="left:1722.00px;top:104.00px;line-height:20px;font-size:12.0px;color:#262626;font-weight:400;transform:scaleX(1.032);transform-origin:0 50%;">Add-ins</div>
<svg style="left:1806px;top:72px" width="30" height="32" viewBox="0 0 30 32"><path d="M2 1h15l6 6v12M2 1v27h12" fill="none" stroke="#3b79c4" stroke-width="1.4"/><path d="M8 19c2-4 3-8 2.5-9.5S9 10 9.5 12s3 4 6 4.5-3 0-6 2" fill="none" stroke="#3b79c4" stroke-width="0.9"/><path d="M20 20l-4 4a2.5 2.5 0 0 0 3.5 3.5l4-4M23 26l4-4a2.5 2.5 0 0 0-3.5-3.5l-4 4" fill="none" stroke="#3b79c4" stroke-width="1.5"/></svg>
<div class="t" style="left:1800.00px;top:104.00px;line-height:20px;font-size:12.0px;color:#262626;font-weight:400;">Create</div>
<div class="t" style="left:1802.00px;top:120.00px;line-height:20px;font-size:12.0px;color:#262626;font-weight:400;transform:scaleX(0.823);transform-origin:0 50%;">a PDF</div>
<svg style="left:1925px;top:147px" width="12" height="7" viewBox="0 0 12 7"><path d="M1 6l5-5 5 5" fill="none" stroke="#444" stroke-width="1.2"/></svg>
<div style="left:0.00px;top:158.00px;width:1946.00px;height:48.00px;background:#e6e6e6"></div>
<div style="left:5.00px;top:169.00px;width:102.50px;height:25.50px;background:#fff;border:1px solid #c6c6c6;box-sizing:border-box"></div>
<div class="t" style="left:12.00px;top:172.00px;line-height:20px;font-size:12.0px;color:#262626;font-weight:400;transform:scaleX(1.043);transform-origin:0 50%;">C2</div>
<svg style="left:93.5px;top:179px" width="7" height="4" viewBox="0 0 7 4"><path d="M0 0h7L3.5 4z" fill="#444"/></svg>
<div style="left:122.50px;top:177.00px;width:1.50px;height:1.50px;background:#888"></div>
<div style="left:122.50px;top:182.00px;width:1.50px;height:1.50px;background:#888"></div>
<div style="left:122.50px;top:187.00px;width:1.50px;height:1.50px;background:#888"></div>
<div style="left:139.00px;top:169.00px;width:110.00px;height:25.50px;background:#fff;border:1px solid #d4d4d4;box-sizing:border-box"></div>
<svg style="left:151px;top:177px" width="12" height="12" viewBox="0 0 12 12"><path d="M1 1l10 10M11 1L1 11" stroke="#a8a8a8" stroke-width="1.2"/></svg>
<svg style="left:187px;top:176px" width="14" height="12" viewBox="0 0 14 12"><path d="M1 6l4 4.5L13 1" fill="none" stroke="#a8a8a8" stroke-width="1.6"/></svg>
<div class="t" style="left:223.50px;top:172.00px;line-height:20px;font-size:15.0px;color:#444;font-weight:700;transform:scaleX(0.975);transform-origin:0 50%;font-family:&quot;Liberation Serif&quot;,serif"><i>f</i><span style="font-size:11px"><i>x</i></span></div>
<div style="left:253.00px;top:169.00px;width:1687.50px;height:25.50px;background:#fff;border:1px solid #d4d4d4;box-sizing:border-box"></div>
<svg style="left:1927.5px;top:179.5px" width="7" height="5" viewBox="0 0 7 5"><path d="M0.7 0.8l2.8 2.8 2.8-2.8" fill="none" stroke="#555" stroke-width="1.1"/></svg>
<div style="left:25.00px;top:222.00px;width:1898.50px;height:773.00px;background:#fff"></div>
<div style="left:0.00px;top:206.00px;width:1925.00px;height:16.50px;background:#e6e6e6"></div>
<div style="left:0.00px;top:221.50px;width:1925.00px;height:1.00px;background:#ababab"></div>
<svg style="left:12px;top:209px" width="10" height="10" viewBox="0 0 10 10"><path d="M10 0v10H0z" fill="#c0c0c0"/></svg>
<div style="left:25.00px;top:206.00px;width:1.00px;height:16.00px;background:#c6c6c6"></div>
<div style="left:161.00px;top:206.00px;width:255.00px;height:15.50px;background:#d2d2d2"></div>
<div style="left:161.00px;top:219.50px;width:255.00px;height:2.50px;background:#217346"></div>
<div style="left:34.50px;top:206.00px;width:1.00px;height:15.50px;background:#c8c8c8"></div>
<div style="left:160.50px;top:206.00px;width:1.00px;height:15.50px;background:#c8c8c8"></div>
<div style="left:415.50px;top:206.00px;width:1.00px;height:15.50px;background:#c8c8c8"></div>
<div style="left:502.50px;top:206.00px;width:1.00px;height:15.50px;background:#c8c8c8"></div>
<div style="left:589.50px;top:206.00px;width:1.00px;height:15.50px;background:#c8c8c8"></div>
<div style="left:677.00px;top:206.00px;width:1.00px;height:15.50px;background:#c8c8c8"></div>
<div style="left:704.00px;top:206.00px;width:1.00px;height:15.50px;background:#c8c8c8"></div>
<div style="left:791.50px;top:206.00px;width:1.00px;height:15.50px;background:#c8c8c8"></div>
<div style="left:862.00px;top:206.00px;width:1.00px;height:15.50px;background:#c8c8c8"></div>
<div style="left:893.90px;top:206.00px;width:1.00px;height:15.50px;background:#c8c8c8"></div>
<div style="left:926.35px;top:206.00px;width:1.00px;height:15.50px;background:#c8c8c8"></div>
<div style="left:958.80px;top:206.00px;width:1.00px;height:15.50px;background:#c8c8c8"></div>
<div style="left:991.25px;top:206.00px;width:1.00px;height:15.50px;background:#c8c8c8"></div>
<div style="left:1023.70px;top:206.00px;width:1.00px;height:15.50px;background:#c8c8c8"></div>
<div style="left:1056.15px;top:206.00px;width:1.00px;height:15.50px;background:#c8c8c8"></div>
<div style="left:1088.60px;top:206.00px;width:1.00px;height:15.50px;background:#c8c8c8"></div>
<div style="left:1121.05px;top:206.00px;width:1.00px;height:15.50px;background:#c8c8c8"></div>
<div style="left:1153.50px;top:206.00px;width:1.00px;height:15.50px;background:#c8c8c8"></div>
<div style="left:1185.95px;top:206.00px;width:1.00px;height:15.50px;background:#c8c8c8"></div>
<div style="left:1218.40px;top:206.00px;width:1.00px;height:15.50px;background:#c8c8c8"></div>
<div style="left:1250.85px;top:206.00px;width:1.00px;height:15.50px;background:#c8c8c8"></div>
<div style="left:1283.30px;top:206.00px;width:1.00px;height:15.50px;background:#c8c8c8"></div>
<div style="left:1315.75px;top:206.00px;width:1.00px;height:15.50px;background:#c8c8c8"></div>
<div style="left:1348.20px;top:206.00px;width:1.00px;height:15.50px;background:#c8c8c8"></div>
<div style="left:1380.65px;top:206.00px;width:1.00px;height:15.50px;background:#c8c8c8"></div>
<div style="left:1413.10px;top:206.00px;width:1.00px;height:15.50px;background:#c8c8c8"></div>
<div style="left:1445.55px;top:206.00px;width:1.00px;height:15.50px;background:#c8c8c8"></div>
<div style="left:1478.00px;top:206.00px;width:1.00px;height:15.50px;background:#c8c8c8"></div>
<div style="left:1510.45px;top:206.00px;width:1.00px;height:15.50px;background:#c8c8c8"></div>
<div style="left:1542.90px;top:206.00px;width:1.00px;height:15.50px;background:#c8c8c8"></div>
<div style="left:1575.35px;top:206.00px;width:1.00px;height:15.50px;background:#c8c8c8"></div>
<div style="left:1607.80px;top:206.00px;width:1.00px;height:15.50px;background:#c8c8c8"></div>
<div style="left:1640.25px;top:206.00px;width:1.00px;height:15.50px;background:#c8c8c8"></div>
<div style="left:1672.70px;top:206.00px;width:1.00px;height:15.50px;background:#c8c8c8"></div>
<div style="left:1705.15px;top:206.00px;width:1.00px;height:15.50px;background:#c8c8c8"></div>
<div style="left:1737.60px;top:206.00px;width:1.00px;height:15.50px;background:#c8c8c8"></div>
<div style="left:1770.05px;top:206.00px;width:1.00px;height:15.50px;background:#c8c8c8"></div>
<div style="left:1802.50px;top:206.00px;width:1.00px;height:15.50px;background:#c8c8c8"></div>
<div style="left:1834.95px;top:206.00px;width:1.00px;height:15.50px;background:#c8c8c8"></div>
<div style="left:1867.40px;top:206.00px;width:1.00px;height:15.50px;background:#c8c8c8"></div>
<div style="left:1899.85px;top:206.00px;width:1.00px;height:15.50px;background:#c8c8c8"></div>
<div style="left:893.90px;top:206.00px;width:1.00px;height:15.50px;background:#c8c8c8"></div>
<div class="t" style="left:26.33px;top:204.00px;line-height:20px;font-size:11.0px;color:#222;font-weight:400;">A</div>
<div class="t" style="left:94.33px;top:204.00px;line-height:20px;font-size:11.0px;color:#222;font-weight:400;">B</div>
<div class="t" style="left:284.53px;top:204.00px;line-height:20px;font-size:11.0px;color:#217346;font-weight:400;">C</div>
<div class="t" style="left:455.53px;top:204.00px;line-height:20px;font-size:11.0px;color:#222;font-weight:400;">D</div>
<div class="t" style="left:542.83px;top:204.00px;line-height:20px;font-size:11.0px;color:#222;font-weight:400;">E</div>
<div class="t" style="left:630.39px;top:204.00px;line-height:20px;font-size:11.0px;color:#222;font-weight:400;">F</div>
<div class="t" style="left:686.72px;top:204.00px;line-height:20px;font-size:11.0px;color:#222;font-weight:400;">G</div>
<div class="t" style="left:744.28px;top:204.00px;line-height:20px;font-size:11.0px;color:#222;font-weight:400;">H</div>
<div class="t" style="left:825.72px;top:204.00px;line-height:20px;font-size:11.0px;color:#222;font-weight:400;">I</div>
<div class="t" style="left:875.70px;top:204.00px;line-height:20px;font-size:11.0px;color:#222;font-weight:400;">J</div>
<div class="t" style="left:906.96px;top:204.00px;line-height:20px;font-size:11.0px;color:#222;font-weight:400;">K</div>
<div class="t" style="left:940.02px;top:204.00px;line-height:20px;font-size:11.0px;color:#222;font-weight:400;">L</div>
<div class="t" style="left:970.94px;top:204.00px;line-height:20px;font-size:11.0px;color:#222;font-weight:400;">M</div>
<div class="t" style="left:1004.00px;top:204.00px;line-height:20px;font-size:11.0px;color:#222;font-weight:400;">N</div>
<div class="t" style="left:1036.15px;top:204.00px;line-height:20px;font-size:11.0px;color:#222;font-weight:400;">O</div>
<div class="t" style="left:1069.21px;top:204.00px;line-height:20px;font-size:11.0px;color:#222;font-weight:400;">P</div>
<div class="t" style="left:1101.05px;top:204.00px;line-height:20px;font-size:11.0px;color:#222;font-weight:400;">Q</div>
<div class="t" style="left:1133.80px;top:204.00px;line-height:20px;font-size:11.0px;color:#222;font-weight:400;">R</div>
<div class="t" style="left:1166.56px;top:204.00px;line-height:20px;font-size:11.0px;color:#222;font-weight:400;">S</div>
<div class="t" style="left:1199.32px;top:204.00px;line-height:20px;font-size:11.0px;color:#222;font-weight:400;">T</div>
<div class="t" style="left:1231.15px;top:204.00px;line-height:20px;font-size:11.0px;color:#222;font-weight:400;">U</div>
<div class="t" style="left:1263.91px;top:204.00px;line-height:20px;font-size:11.0px;color:#222;font-weight:400;">V</div>
<div class="t" style="left:1294.83px;top:204.00px;line-height:20px;font-size:11.0px;color:#222;font-weight:400;">W</div>
<div class="t" style="left:1328.81px;top:204.00px;line-height:20px;font-size:11.0px;color:#222;font-weight:400;">X</div>
<div class="t" style="left:1361.26px;top:204.00px;line-height:20px;font-size:11.0px;color:#222;font-weight:400;">Y</div>
<div class="t" style="left:1394.02px;top:204.00px;line-height:20px;font-size:11.0px;color:#222;font-weight:400;">Z</div>
<div class="t" style="left:1422.49px;top:204.00px;line-height:20px;font-size:11.0px;color:#222;font-weight:400;">AA</div>
<div class="t" style="left:1454.94px;top:204.00px;line-height:20px;font-size:11.0px;color:#222;font-weight:400;">AB</div>
<div class="t" style="left:1487.08px;top:204.00px;line-height:20px;font-size:11.0px;color:#222;font-weight:400;">AC</div>
<div class="t" style="left:1519.53px;top:204.00px;line-height:20px;font-size:11.0px;color:#222;font-weight:400;">AD</div>
<div class="t" style="left:1552.29px;top:204.00px;line-height:20px;font-size:11.0px;color:#222;font-weight:400;">AE</div>
<div class="t" style="left:1585.05px;top:204.00px;line-height:20px;font-size:11.0px;color:#222;font-weight:400;">AF</div>
<div class="t" style="left:1616.58px;top:204.00px;line-height:20px;font-size:11.0px;color:#222;font-weight:400;">AG</div>
<div class="t" style="left:1649.33px;top:204.00px;line-height:20px;font-size:11.0px;color:#222;font-weight:400;">AH</div>
<div class="t" style="left:1684.23px;top:204.00px;line-height:20px;font-size:11.0px;color:#222;font-weight:400;">AI</div>
<div class="t" style="left:1715.46px;top:204.00px;line-height:20px;font-size:11.0px;color:#222;font-weight:400;">AJ</div>
<div class="t" style="left:1746.99px;top:204.00px;line-height:20px;font-size:11.0px;color:#222;font-weight:400;">AK</div>
<div class="t" style="left:1780.05px;top:204.00px;line-height:20px;font-size:11.0px;color:#222;font-weight:400;">AL</div>
<div class="t" style="left:1810.97px;top:204.00px;line-height:20px;font-size:11.0px;color:#222;font-weight:400;">AM</div>
<div class="t" style="left:1844.03px;top:204.00px;line-height:20px;font-size:11.0px;color:#222;font-weight:400;">AN</div>
<div class="t" style="left:1876.18px;top:204.00px;line-height:20px;font-size:11.0px;color:#222;font-weight:400;">AO</div>
<div class="t" style="left:1904.59px;top:204.00px;line-height:20px;font-size:11.0px;color:#222;font-weight:400;">AP</div>
<div style="left:0.00px;top:222.00px;width:25.00px;height:773.00px;background:#e6e6e6"></div>
<div style="left:24.50px;top:222.00px;width:1.00px;height:773.00px;background:#ababab"></div>
<div style="left:0.00px;top:229.00px;width:24.50px;height:42.50px;background:#d2d2d2"></div>
<div style="left:22.50px;top:229.00px;width:2.50px;height:42.50px;background:#217346"></div>
<div style="left:0.00px;top:228.50px;width:24.50px;height:1.00px;background:#c8c8c8"></div>
<div style="left:0.00px;top:271.00px;width:24.50px;height:1.00px;background:#c8c8c8"></div>
<div class="t" style="left:9.44px;top:253.00px;line-height:20px;font-size:11.0px;color:#217346;font-weight:400;">2</div>
<div style="left:0.00px;top:313.50px;width:24.50px;height:1.00px;background:#c8c8c8"></div>
<div class="t" style="left:9.44px;top:295.50px;line-height:20px;font-size:11.0px;color:#222;font-weight:400;">3</div>
<div style="left:0.00px;top:356.10px;width:24.50px;height:1.00px;background:#c8c8c8"></div>
<div class="t" style="left:9.44px;top:338.10px;line-height:20px;font-size:11.0px;color:#222;font-weight:400;">4</div>
<div style="left:0.00px;top:373.30px;width:24.50px;height:1.00px;background:#c8c8c8"></div>
<div class="t" style="left:9.44px;top:355.30px;line-height:20px;font-size:11.0px;color:#222;font-weight:400;">5</div>
<div style="left:0.00px;top:390.50px;width:24.50px;height:1.00px;background:#c8c8c8"></div>
<div class="t" style="left:9.44px;top:372.50px;line-height:20px;font-size:11.0px;color:#222;font-weight:400;">6</div>
<div style="left:0.00px;top:407.70px;width:24.50px;height:1.00px;background:#c8c8c8"></div>
<div class="t" style="left:9.44px;top:389.70px;line-height:20px;font-size:11.0px;color:#222;font-weight:400;">7</div>
<div style="left:0.00px;top:424.90px;width:24.50px;height:1.00px;background:#c8c8c8"></div>
<div class="t" style="left:9.44px;top:406.90px;line-height:20px;font-size:11.0px;color:#222;font-weight:400;">8</div>
<div style="left:0.00px;top:442.10px;width:24.50px;height:1.00px;background:#c8c8c8"></div>
<div class="t" style="left:9.44px;top:424.10px;line-height:20px;font-size:11.0px;color:#222;font-weight:400;">9</div>
<div style="left:0.00px;top:459.50px;width:24.50px;height:1.00px;background:#c8c8c8"></div>
<div class="t" style="left:6.38px;top:441.50px;line-height:20px;font-size:11.0px;color:#222;font-weight:400;">10</div>
<div style="left:0.00px;top:494.70px;width:24.50px;height:1.00px;background:#c8c8c8"></div>
<div class="t" style="left:6.79px;top:476.70px;line-height:20px;font-size:11.0px;color:#222;font-weight:400;">11</div>
<div style="left:0.00px;top:513.98px;width:24.50px;height:1.00px;background:#c8c8c8"></div>
<div class="t" style="left:6.38px;top:495.98px;line-height:20px;font-size:11.0px;color:#222;font-weight:400;">12</div>
<div style="left:0.00px;top:533.26px;width:24.50px;height:1.00px;background:#c8c8c8"></div>
<div class="t" style="left:6.38px;top:515.26px;line-height:20px;font-size:11.0px;color:#222;font-weight:400;">13</div>
<div style="left:0.00px;top:552.54px;width:24.50px;height:1.00px;background:#c8c8c8"></div>
<div class="t" style="left:6.38px;top:534.54px;line-height:20px;font-size:11.0px;color:#222;font-weight:400;">14</div>
<div style="left:0.00px;top:571.82px;width:24.50px;height:1.00px;background:#c8c8c8"></div>
<div class="t" style="left:6.38px;top:553.82px;line-height:20px;font-size:11.0px;color:#222;font-weight:400;">15</div>
<div style="left:0.00px;top:591.10px;width:24.50px;height:1.00px;background:#c8c8c8"></div>
<div class="t" style="left:6.38px;top:573.10px;line-height:20px;font-size:11.0px;color:#222;font-weight:400;">16</div>
<div style="left:0.00px;top:610.38px;width:24.50px;height:1.00px;background:#c8c8c8"></div>
<div class="t" style="left:6.38px;top:592.38px;line-height:20px;font-size:11.0px;color:#222;font-weight:400;">17</div>
<div style="left:0.00px;top:629.66px;width:24.50px;height:1.00px;background:#c8c8c8"></div>
<div class="t" style="left:6.38px;top:611.66px;line-height:20px;font-size:11.0px;color:#222;font-weight:400;">18</div>
<div style="left:0.00px;top:648.94px;width:24.50px;height:1.00px;background:#c8c8c8"></div>
<div class="t" style="left:6.38px;top:630.94px;line-height:20px;font-size:11.0px;color:#222;font-weight:400;">19</div>
<div style="left:0.00px;top:668.22px;width:24.50px;height:1.00px;background:#c8c8c8"></div>
<div class="t" style="left:6.38px;top:650.22px;line-height:20px;font-size:11.0px;color:#222;font-weight:400;">20</div>
<div style="left:0.00px;top:687.50px;width:24.50px;height:1.00px;background:#c8c8c8"></div>
<div class="t" style="left:6.38px;top:669.50px;line-height:20px;font-size:11.0px;color:#222;font-weight:400;">21</div>
<div style="left:0.00px;top:706.78px;width:24.50px;height:1.00px;background:#c8c8c8"></div>
<div class="t" style="left:6.38px;top:688.78px;line-height:20px;font-size:11.0px;color:#222;font-weight:400;">22</div>
<div style="left:0.00px;top:726.06px;width:24.50px;height:1.00px;background:#c8c8c8"></div>
<div class="t" style="left:6.38px;top:708.06px;line-height:20px;font-size:11.0px;color:#222;font-weight:400;">23</div>
<div style="left:0.00px;top:745.34px;width:24.50px;height:1.00px;background:#c8c8c8"></div>
<div class="t" style="left:6.38px;top:727.34px;line-height:20px;font-size:11.0px;color:#222;font-weight:400;">24</div>
<div style="left:0.00px;top:764.62px;width:24.50px;height:1.00px;background:#c8c8c8"></div>
<div class="t" style="left:6.38px;top:746.62px;line-height:20px;font-size:11.0px;color:#222;font-weight:400;">25</div>
<div style="left:0.00px;top:783.90px;width:24.50px;height:1.00px;background:#c8c8c8"></div>
<div class="t" style="left:6.38px;top:765.90px;line-height:20px;font-size:11.0px;color:#222;font-weight:400;">26</div>
<div style="left:0.00px;top:803.18px;width:24.50px;height:1.00px;background:#c8c8c8"></div>
<div class="t" style="left:6.38px;top:785.18px;line-height:20px;font-size:11.0px;color:#222;font-weight:400;">27</div>
<div style="left:0.00px;top:822.46px;width:24.50px;height:1.00px;background:#c8c8c8"></div>
<div class="t" style="left:6.38px;top:804.46px;line-height:20px;font-size:11.0px;color:#222;font-weight:400;">28</div>
<div style="left:0.00px;top:841.74px;width:24.50px;height:1.00px;background:#c8c8c8"></div>
<div class="t" style="left:6.38px;top:823.74px;line-height:20px;font-size:11.0px;color:#222;font-weight:400;">29</div>
<div style="left:0.00px;top:861.02px;width:24.50px;height:1.00px;background:#c8c8c8"></div>
<div class="t" style="left:6.38px;top:843.02px;line-height:20px;font-size:11.0px;color:#222;font-weight:400;">30</div>
<div style="left:0.00px;top:880.30px;width:24.50px;height:1.00px;background:#c8c8c8"></div>
<div class="t" style="left:6.38px;top:862.30px;line-height:20px;font-size:11.0px;color:#222;font-weight:400;">31</div>
<div style="left:0.00px;top:899.58px;width:24.50px;height:1.00px;background:#c8c8c8"></div>
<div class="t" style="left:6.38px;top:881.58px;line-height:20px;font-size:11.0px;color:#222;font-weight:400;">32</div>
<div style="left:0.00px;top:918.86px;width:24.50px;height:1.00px;background:#c8c8c8"></div>
<div class="t" style="left:6.38px;top:900.86px;line-height:20px;font-size:11.0px;color:#222;font-weight:400;">33</div>
<div style="left:0.00px;top:938.14px;width:24.50px;height:1.00px;background:#c8c8c8"></div>
<div class="t" style="left:6.38px;top:920.14px;line-height:20px;font-size:11.0px;color:#222;font-weight:400;">34</div>
<div style="left:0.00px;top:957.42px;width:24.50px;height:1.00px;background:#c8c8c8"></div>
<div class="t" style="left:6.38px;top:939.42px;line-height:20px;font-size:11.0px;color:#222;font-weight:400;">35</div>
<div style="left:0.00px;top:976.70px;width:24.50px;height:1.00px;background:#c8c8c8"></div>
<div class="t" style="left:6.38px;top:958.70px;line-height:20px;font-size:11.0px;color:#222;font-weight:400;">36</div>
<div class="t" style="left:6.38px;top:976.50px;line-height:20px;font-size:11.0px;color:#222;font-weight:400;">37</div>
<div style="left:35.00px;top:229.00px;width:381.00px;height:213.60px;border:1px solid #2f5ea8;box-sizing:border-box"></div>
<div style="left:35.00px;top:271.00px;width:381.00px;height:1.00px;background:#2f5ea8"></div>
<div style="left:35.00px;top:313.50px;width:381.00px;height:1.00px;background:#2f5ea8"></div>
<div style="left:35.00px;top:356.10px;width:381.00px;height:1.00px;background:#2f5ea8"></div>
<div style="left:160.50px;top:229.00px;width:1.00px;height:127.60px;background:#2f5ea8"></div>
<div class="t" style="left:38.50px;top:241.00px;line-height:20px;font-size:11.16px;color:#111;font-weight:700;transform:scaleX(0.935);transform-origin:0 50%;">Project Title</div>
<div class="t" style="left:38.50px;top:283.50px;line-height:20px;font-size:11.16px;color:#111;font-weight:700;transform:scaleX(1.046);transform-origin:0 50%;">Organisation Name</div>
<div class="t" style="left:38.50px;top:326.00px;line-height:20px;font-size:11.16px;color:#111;font-weight:700;transform:scaleX(0.956);transform-origin:0 50%;">Project Lead</div>
<div class="t" style="left:38.50px;top:357.00px;line-height:20px;font-size:11.16px;color:#111;font-weight:700;transform:scaleX(0.974);transform-origin:0 50%;">Project Aim</div>
<div style="left:160.00px;top:228.00px;width:257.00px;height:44.50px;border:2px solid #217346;box-sizing:border-box"></div>
<div style="left:413.00px;top:268.50px;width:6.00px;height:6.00px;background:#217346;border:1px solid #fff;box-sizing:border-box"></div>
<div style="left:416.00px;top:313.50px;width:1507.50px;height:1.20px;background:#2f5ea8"></div>
<div style="left:416.00px;top:229.00px;width:261.50px;height:41.50px;background:#023e8a"></div>
<div class="t" style="left:521.75px;top:241.00px;line-height:20px;font-size:13.950000000000001px;color:#fff;font-weight:700;transform:scaleX(1.024);transform-origin:0 50%;">Priority</div>
<div style="left:416.00px;top:272.00px;width:87.00px;height:41.50px;background:#0d3b66"></div>
<div class="t" style="left:442.50px;top:283.50px;line-height:20px;font-size:11.16px;color:#fff;font-weight:700;transform:scaleX(0.946);transform-origin:0 50%;">Urgent</div>
<div style="left:504.00px;top:272.00px;width:86.00px;height:41.50px;background:#f4d35e"></div>
<div class="t" style="left:526.00px;top:283.50px;line-height:20px;font-size:11.16px;color:#111;font-weight:700;transform:scaleX(0.973);transform-origin:0 50%;">Medium</div>
<div style="left:591.00px;top:272.00px;width:86.50px;height:41.50px;background:#faf0ca"></div>
<div class="t" style="left:623.25px;top:283.50px;line-height:20px;font-size:11.16px;color:#111;font-weight:700;transform:scaleX(0.941);transform-origin:0 50%;">Low</div>
<div style="left:471.00px;top:377.00px;width:29.00px;height:14.00px;background:#f0f0f0;border-bottom:1px solid #666;border-right:1px solid #666;box-sizing:border-box"></div>
<div style="left:471.00px;top:391.00px;width:29.00px;height:17.00px;background:#f0f0f0;border-bottom:2px solid #555;border-right:2px solid #555;box-sizing:border-box"></div>
<svg style="left:480.5px;top:380.5px" width="10" height="6" viewBox="0 0 10 6"><path d="M0 6h10L5 0z" fill="#111"/></svg>
<svg style="left:480.5px;top:397.5px" width="10" height="6" viewBox="0 0 10 6"><path d="M0 0h10L5 6z" fill="#111"/></svg>
<div style="left:503.00px;top:373.80px;width:174.50px;height:34.40px;border:1.3px solid #111;box-sizing:border-box"></div>
<div style="left:503.00px;top:390.50px;width:174.50px;height:1.20px;background:#111"></div>
<div style="left:589.50px;top:373.80px;width:1.20px;height:34.40px;background:#111"></div>
<div class="t" style="left:506.00px;top:374.00px;line-height:20px;font-size:11.16px;color:#111;font-weight:700;transform:scaleX(0.937);transform-origin:0 50%;">Increment</div>
<div class="t" style="left:626.50px;top:374.00px;line-height:20px;font-size:11.16px;color:#111;font-weight:400;transform:scaleX(1.047);transform-origin:0 50%;">10</div>
<div class="t" style="left:506.00px;top:391.00px;line-height:20px;font-size:11.16px;color:#111;font-weight:700;transform:scaleX(0.906);transform-origin:0 50%;">Project start</div>
<div class="t" style="left:593.00px;top:391.00px;line-height:20px;font-size:11.16px;color:#111;font-weight:400;transform:scaleX(1.253);transform-origin:0 50%;">01/07/2025</div>
<div style="left:704.50px;top:373.80px;width:87.50px;height:17.20px;border:1.3px solid #111;box-sizing:border-box"></div>
<div class="t" style="left:707.00px;top:373.50px;line-height:20px;font-size:11.16px;color:#111;font-weight:700;transform:scaleX(0.909);transform-origin:0 50%;">Status</div>
<div style="left:792.00px;top:374.10px;width:71.50px;height:16.00px;background:#540d6e"></div>
<div class="t" style="left:794.50px;top:374.20px;line-height:20px;font-size:11.16px;color:#fff;font-weight:400;transform:scaleX(1.098);transform-origin:0 50%;">Not Started</div>
<div style="left:792.00px;top:391.30px;width:71.50px;height:16.00px;background:#ee4266"></div>
<div class="t" style="left:794.50px;top:391.40px;line-height:20px;font-size:11.16px;color:#fff;font-weight:400;transform:scaleX(1.075);transform-origin:0 50%;">On Hold</div>
<div style="left:792.00px;top:408.50px;width:71.50px;height:16.00px;background:#3bceac"></div>
<div class="t" style="left:794.50px;top:408.60px;line-height:20px;font-size:11.16px;color:#fff;font-weight:400;transform:scaleX(1.108);transform-origin:0 50%;">Cancelled</div>
<div style="left:792.00px;top:425.70px;width:71.50px;height:16.00px;background:#ffd23f"></div>
<div class="t" style="left:794.50px;top:425.80px;line-height:20px;font-size:11.16px;color:#111;font-weight:400;transform:scaleX(1.034);transform-origin:0 50%;">In Progress</div>
<div style="left:792.00px;top:442.90px;width:71.50px;height:16.20px;background:#0ead69"></div>
<div class="t" style="left:794.50px;top:443.10px;line-height:20px;font-size:11.16px;color:#fff;font-weight:400;transform:scaleX(1.075);transform-origin:0 50%;">Completed</div>
<div style="left:35.00px;top:461.20px;width:859.40px;height:33.70px;background:#023e8a"></div>
<div style="left:160.50px;top:461.20px;width:1.00px;height:33.70px;background:#dfe8f5"></div>
<div style="left:415.50px;top:461.20px;width:1.00px;height:33.70px;background:#dfe8f5"></div>
<div style="left:502.50px;top:461.20px;width:1.00px;height:33.70px;background:#dfe8f5"></div>
<div style="left:589.50px;top:461.20px;width:1.00px;height:33.70px;background:#dfe8f5"></div>
<div style="left:677.00px;top:461.20px;width:1.00px;height:33.70px;background:#dfe8f5"></div>
<div style="left:704.00px;top:461.20px;width:1.00px;height:33.70px;background:#dfe8f5"></div>
<div style="left:791.50px;top:461.20px;width:1.00px;height:33.70px;background:#dfe8f5"></div>
<div style="left:862.00px;top:461.20px;width:1.00px;height:33.70px;background:#dfe8f5"></div>
<div class="t" style="left:81.00px;top:469.90px;line-height:20px;font-size:11.16px;color:#fff;font-weight:700;transform:scaleX(0.899);transform-origin:0 50%;">Project</div>
<div class="t" style="left:265.50px;top:469.90px;line-height:20px;font-size:11.16px;color:#fff;font-weight:700;transform:scaleX(0.951);transform-origin:0 50%;">Progress</div>
<div class="t" style="left:439.50px;top:469.90px;line-height:20px;font-size:11.16px;color:#fff;font-weight:700;transform:scaleX(1.024);transform-origin:0 50%;">Priority</div>
<div class="t" style="left:522.50px;top:469.90px;line-height:20px;font-size:11.16px;color:#fff;font-weight:700;transform:scaleX(0.933);transform-origin:0 50%;">Start date</div>
<div class="t" style="left:610.75px;top:469.90px;line-height:20px;font-size:11.16px;color:#fff;font-weight:700;transform:scaleX(0.976);transform-origin:0 50%;">End date</div>
<div class="t" style="left:715.25px;top:469.90px;line-height:20px;font-size:11.16px;color:#fff;font-weight:700;transform:scaleX(1.034);transform-origin:0 50%;">Assigned to</div>
<div class="t" style="left:808.75px;top:469.90px;line-height:20px;font-size:11.16px;color:#fff;font-weight:700;transform:scaleX(1.085);transform-origin:0 50%;">Status</div>
<svg style="left:683px;top:473px" width="15.5" height="11" viewBox="0 0 15.5 11"><rect x="0" y="0" width="15.5" height="11" rx="1.5" fill="#fff"/><path d="M2.5 1L5 3H10.5L13 1ZM2.5 10L5 8H10.5L13 10Z" fill="#5a7fb5"/><rect x="2.3" y="3.5" width="2" height="4" fill="#1a3d8a"/><rect x="11.2" y="3.5" width="2" height="4" fill="#1a3d8a"/></svg>
<svg style="left:872.5px;top:473.0px" width="10.4" height="12.2" viewBox="0 0 12 14"><path fill-rule="evenodd" fill="#fff" d="M2.6 0H9.4L12 3.4 7.2 8.3V9.6L10 10.3V14H2V10.3L4.8 9.6V8.3L0 3.4ZM4.1 1.8H7.9L7.4 5.2 6 6.6 4.6 5.2ZM4.2 12a1.8 .75 0 1 0 3.6 0a1.8 .75 0 1 0-3.6 0Z"/></svg>
<div style="left:35.00px;top:495.80px;width:381.00px;height:17.98px;background:#0077b6"></div>
<div style="left:160.50px;top:495.80px;width:1.00px;height:17.98px;background:#cfe3f2"></div>
<div class="t" style="left:38.00px;top:496.64px;line-height:20px;font-size:11.16px;color:#fff;font-weight:700;">Title 1</div>
<div style="left:416.50px;top:496.00px;width:86.00px;height:17.68px;background:#faf0ca"></div>
<div class="t" style="left:419.00px;top:496.64px;line-height:20px;font-size:11.16px;color:#111;font-weight:700;transform:scaleX(0.941);transform-origin:0 50%;">Low</div>
<div class="t" style="left:505.20px;top:496.64px;line-height:20px;font-size:11.16px;color:#222;font-weight:400;transform:scaleX(1.271);transform-origin:0 50%;">03/07/2025</div>
<div class="t" style="left:593.30px;top:496.64px;line-height:20px;font-size:11.16px;color:#222;font-weight:400;transform:scaleX(1.271);transform-origin:0 50%;">16/08/2025</div>
<div style="left:792.50px;top:496.00px;width:70.50px;height:17.68px;background:#540d6e"></div>
<div class="t" style="left:795.00px;top:496.64px;line-height:20px;font-size:11.16px;color:#fff;font-weight:700;transform:scaleX(0.964);transform-origin:0 50%;">Not Started</div>
<div style="left:35.00px;top:514.48px;width:126.00px;height:19.28px;background:#caf0f8"></div>
<div style="left:161.00px;top:532.76px;width:255.00px;height:1.00px;background:#caf0f8"></div>
<div class="t" style="left:49.80px;top:515.92px;line-height:20px;font-size:11.16px;color:#222;font-weight:400;">Task 1</div>
<div style="left:416.50px;top:515.28px;width:86.00px;height:17.68px;background:#0d3b66"></div>
<div class="t" style="left:419.00px;top:515.92px;line-height:20px;font-size:11.16px;color:#fff;font-weight:700;transform:scaleX(0.946);transform-origin:0 50%;">Urgent</div>
<div class="t" style="left:505.20px;top:515.92px;line-height:20px;font-size:11.16px;color:#222;font-weight:400;transform:scaleX(1.271);transform-origin:0 50%;">04/07/2025</div>
<div class="t" style="left:593.30px;top:515.92px;line-height:20px;font-size:11.16px;color:#222;font-weight:400;transform:scaleX(1.271);transform-origin:0 50%;">26/08/2025</div>
<div style="left:792.50px;top:515.28px;width:70.50px;height:17.68px;background:#ee4266"></div>
<div class="t" style="left:795.00px;top:515.92px;line-height:20px;font-size:11.16px;color:#fff;font-weight:700;transform:scaleX(1.037);transform-origin:0 50%;">On Hold</div>
<div style="left:35.00px;top:533.76px;width:126.00px;height:19.28px;background:#caf0f8"></div>
<div style="left:161.00px;top:552.04px;width:255.00px;height:1.00px;background:#caf0f8"></div>
<div class="t" style="left:49.80px;top:535.20px;line-height:20px;font-size:11.16px;color:#222;font-weight:400;">Task 2</div>
<div style="left:416.50px;top:534.56px;width:86.00px;height:17.68px;background:#0d3b66"></div>
<div class="t" style="left:419.00px;top:535.20px;line-height:20px;font-size:11.16px;color:#fff;font-weight:700;transform:scaleX(0.946);transform-origin:0 50%;">Urgent</div>
<div class="t" style="left:505.20px;top:535.20px;line-height:20px;font-size:11.16px;color:#222;font-weight:400;transform:scaleX(1.271);transform-origin:0 50%;">15/07/2025</div>
<div class="t" style="left:593.30px;top:535.20px;line-height:20px;font-size:11.16px;color:#222;font-weight:400;transform:scaleX(1.271);transform-origin:0 50%;">22/08/2025</div>
<div style="left:792.50px;top:534.56px;width:70.50px;height:17.68px;background:#3bceac"></div>
<div class="t" style="left:795.00px;top:535.20px;line-height:20px;font-size:11.16px;color:#fff;font-weight:700;">Cancelled</div>
<div style="left:35.00px;top:553.04px;width:126.00px;height:19.28px;background:#caf0f8"></div>
<div style="left:161.00px;top:571.32px;width:255.00px;height:1.00px;background:#caf0f8"></div>
<div class="t" style="left:49.80px;top:554.48px;line-height:20px;font-size:11.16px;color:#222;font-weight:400;">Task 3</div>
<div style="left:416.50px;top:553.84px;width:86.00px;height:17.68px;background:#faf0ca"></div>
<div class="t" style="left:419.00px;top:554.48px;line-height:20px;font-size:11.16px;color:#111;font-weight:700;transform:scaleX(0.941);transform-origin:0 50%;">Low</div>
<div class="t" style="left:505.20px;top:554.48px;line-height:20px;font-size:11.16px;color:#222;font-weight:400;transform:scaleX(1.271);transform-origin:0 50%;">14/07/2025</div>
<div class="t" style="left:593.30px;top:554.48px;line-height:20px;font-size:11.16px;color:#222;font-weight:400;transform:scaleX(1.271);transform-origin:0 50%;">20/08/2025</div>
<div style="left:792.50px;top:553.84px;width:70.50px;height:17.68px;background:#ffd23f"></div>
<div class="t" style="left:795.00px;top:554.48px;line-height:20px;font-size:11.16px;color:#111;font-weight:700;">In Progress</div>
<div style="left:35.00px;top:572.32px;width:126.00px;height:19.28px;background:#caf0f8"></div>
<div style="left:161.00px;top:590.60px;width:255.00px;height:1.00px;background:#caf0f8"></div>
<div class="t" style="left:49.80px;top:573.76px;line-height:20px;font-size:11.16px;color:#222;font-weight:400;">Task 4</div>
<div style="left:416.50px;top:573.12px;width:86.00px;height:17.68px;background:#f4d35e"></div>
<div class="t" style="left:419.00px;top:573.76px;line-height:20px;font-size:11.16px;color:#111;font-weight:700;transform:scaleX(0.973);transform-origin:0 50%;">Medium</div>
<div class="t" style="left:505.20px;top:573.76px;line-height:20px;font-size:11.16px;color:#222;font-weight:400;transform:scaleX(1.271);transform-origin:0 50%;">12/07/2025</div>
<div class="t" style="left:593.30px;top:573.76px;line-height:20px;font-size:11.16px;color:#222;font-weight:400;transform:scaleX(1.271);transform-origin:0 50%;">21/08/2025</div>
<div style="left:792.50px;top:573.12px;width:70.50px;height:17.68px;background:#0ead69"></div>
<div class="t" style="left:795.00px;top:573.76px;line-height:20px;font-size:11.16px;color:#fff;font-weight:700;transform:scaleX(0.989);transform-origin:0 50%;">Completed</div>
<svg style="left:872px;top:576.1px" width="12.0" height="14.0" viewBox="0 0 12 14"><path fill-rule="evenodd" fill="#fdb515" d="M2.6 0H9.4L12 3.4 7.2 8.3V9.6L10 10.3V14H2V10.3L4.8 9.6V8.3L0 3.4ZM4.1 1.8H7.9L7.4 5.2 6 6.6 4.6 5.2ZM4.2 12a1.8 .75 0 1 0 3.6 0a1.8 .75 0 1 0-3.6 0Z"/></svg>
<div style="left:35.00px;top:591.60px;width:126.00px;height:19.28px;background:#caf0f8"></div>
<div class="t" style="left:49.80px;top:593.04px;line-height:20px;font-size:11.16px;color:#222;font-weight:400;">Task 5</div>
<div class="t" style="left:505.20px;top:593.04px;line-height:20px;font-size:11.16px;color:#222;font-weight:400;transform:scaleX(1.290);transform-origin:0 50%;">11/07/2025</div>
<div class="t" style="left:593.30px;top:593.04px;line-height:20px;font-size:11.16px;color:#222;font-weight:400;transform:scaleX(1.271);transform-origin:0 50%;">13/08/2025</div>
<div style="left:792.50px;top:592.40px;width:70.50px;height:17.68px;background:#ee4266"></div>
<div class="t" style="left:795.00px;top:593.04px;line-height:20px;font-size:11.16px;color:#fff;font-weight:700;transform:scaleX(1.037);transform-origin:0 50%;">On Hold</div>
<div style="left:35.00px;top:611.48px;width:381.00px;height:17.98px;background:#0077b6"></div>
<div style="left:160.50px;top:611.48px;width:1.00px;height:17.98px;background:#cfe3f2"></div>
<div class="t" style="left:38.00px;top:612.32px;line-height:20px;font-size:11.16px;color:#fff;font-weight:700;">Title 2</div>
<div class="t" style="left:505.20px;top:612.32px;line-height:20px;font-size:11.16px;color:#222;font-weight:400;transform:scaleX(1.271);transform-origin:0 50%;">02/07/2025</div>
<div class="t" style="left:593.30px;top:612.32px;line-height:20px;font-size:11.16px;color:#222;font-weight:400;transform:scaleX(1.271);transform-origin:0 50%;">28/08/2025</div>
<div style="left:792.50px;top:611.68px;width:70.50px;height:17.68px;background:#ffd23f"></div>
<div class="t" style="left:795.00px;top:612.32px;line-height:20px;font-size:11.16px;color:#111;font-weight:700;">In Progress</div>
<div style="left:35.00px;top:630.16px;width:126.00px;height:19.28px;background:#caf0f8"></div>
<div style="left:161.00px;top:648.44px;width:255.00px;height:1.00px;background:#caf0f8"></div>
<div class="t" style="left:49.80px;top:631.60px;line-height:20px;font-size:11.16px;color:#222;font-weight:400;">Task 1</div>
<div class="t" style="left:505.20px;top:631.60px;line-height:20px;font-size:11.16px;color:#222;font-weight:400;transform:scaleX(1.271);transform-origin:0 50%;">03/07/2025</div>
<div class="t" style="left:593.30px;top:631.60px;line-height:20px;font-size:11.16px;color:#222;font-weight:400;transform:scaleX(1.271);transform-origin:0 50%;">16/08/2025</div>
<div style="left:792.50px;top:630.96px;width:70.50px;height:17.68px;background:#ee4266"></div>
<div class="t" style="left:795.00px;top:631.60px;line-height:20px;font-size:11.16px;color:#fff;font-weight:700;transform:scaleX(1.037);transform-origin:0 50%;">On Hold</div>
<div style="left:35.00px;top:649.44px;width:126.00px;height:19.28px;background:#caf0f8"></div>
<div style="left:161.00px;top:667.72px;width:255.00px;height:1.00px;background:#caf0f8"></div>
<div class="t" style="left:49.80px;top:650.88px;line-height:20px;font-size:11.16px;color:#222;font-weight:400;">Task 2</div>
<div class="t" style="left:505.20px;top:650.88px;line-height:20px;font-size:11.16px;color:#222;font-weight:400;transform:scaleX(1.271);transform-origin:0 50%;">04/07/2025</div>
<div class="t" style="left:593.30px;top:650.88px;line-height:20px;font-size:11.16px;color:#222;font-weight:400;transform:scaleX(1.271);transform-origin:0 50%;">26/08/2025</div>
<div style="left:792.50px;top:650.24px;width:70.50px;height:17.68px;background:#ffd23f"></div>
<div class="t" style="left:795.00px;top:650.88px;line-height:20px;font-size:11.16px;color:#111;font-weight:700;">In Progress</div>
<div style="left:35.00px;top:668.72px;width:126.00px;height:19.28px;background:#caf0f8"></div>
<div style="left:161.00px;top:687.00px;width:255.00px;height:1.00px;background:#caf0f8"></div>
<div class="t" style="left:49.80px;top:670.16px;line-height:20px;font-size:11.16px;color:#222;font-weight:400;">Task 3</div>
<div class="t" style="left:505.20px;top:670.16px;line-height:20px;font-size:11.16px;color:#222;font-weight:400;transform:scaleX(1.271);transform-origin:0 50%;">15/07/2025</div>
<div class="t" style="left:593.30px;top:670.16px;line-height:20px;font-size:11.16px;color:#222;font-weight:400;transform:scaleX(1.271);transform-origin:0 50%;">22/08/2025</div>
<div style="left:792.50px;top:669.52px;width:70.50px;height:17.68px;background:#3bceac"></div>
<div class="t" style="left:795.00px;top:670.16px;line-height:20px;font-size:11.16px;color:#fff;font-weight:700;">Cancelled</div>
<svg style="left:872px;top:672.5px" width="12.0" height="14.0" viewBox="0 0 12 14"><path fill-rule="evenodd" fill="#fdb515" d="M2.6 0H9.4L12 3.4 7.2 8.3V9.6L10 10.3V14H2V10.3L4.8 9.6V8.3L0 3.4ZM4.1 1.8H7.9L7.4 5.2 6 6.6 4.6 5.2ZM4.2 12a1.8 .75 0 1 0 3.6 0a1.8 .75 0 1 0-3.6 0Z"/></svg>
<div style="left:35.00px;top:688.00px;width:126.00px;height:19.28px;background:#caf0f8"></div>
<div style="left:161.00px;top:706.28px;width:255.00px;height:1.00px;background:#caf0f8"></div>
<div class="t" style="left:49.80px;top:689.44px;line-height:20px;font-size:11.16px;color:#222;font-weight:400;">Task 4</div>
<div class="t" style="left:505.20px;top:689.44px;line-height:20px;font-size:11.16px;color:#222;font-weight:400;transform:scaleX(1.271);transform-origin:0 50%;">14/07/2025</div>
<div class="t" style="left:593.30px;top:689.44px;line-height:20px;font-size:11.16px;color:#222;font-weight:400;transform:scaleX(1.271);transform-origin:0 50%;">20/08/2025</div>
<div style="left:792.50px;top:688.80px;width:70.50px;height:17.68px;background:#540d6e"></div>
<div class="t" style="left:795.00px;top:689.44px;line-height:20px;font-size:11.16px;color:#fff;font-weight:700;transform:scaleX(0.964);transform-origin:0 50%;">Not Started</div>
<div style="left:35.00px;top:707.28px;width:126.00px;height:19.28px;background:#caf0f8"></div>
<div class="t" style="left:49.80px;top:708.72px;line-height:20px;font-size:11.16px;color:#222;font-weight:400;">Task 5</div>
<div style="left:416.50px;top:708.08px;width:86.00px;height:17.68px;background:#faf0ca"></div>
<div class="t" style="left:419.00px;top:708.72px;line-height:20px;font-size:11.16px;color:#111;font-weight:700;transform:scaleX(0.941);transform-origin:0 50%;">Low</div>
<div class="t" style="left:505.20px;top:708.72px;line-height:20px;font-size:11.16px;color:#222;font-weight:400;transform:scaleX(1.271);transform-origin:0 50%;">12/07/2025</div>
<div class="t" style="left:593.30px;top:708.72px;line-height:20px;font-size:11.16px;color:#222;font-weight:400;transform:scaleX(1.271);transform-origin:0 50%;">21/08/2025</div>
<div style="left:792.50px;top:708.08px;width:70.50px;height:17.68px;background:#ee4266"></div>
<div class="t" style="left:795.00px;top:708.72px;line-height:20px;font-size:11.16px;color:#fff;font-weight:700;transform:scaleX(1.037);transform-origin:0 50%;">On Hold</div>
<div style="left:35.00px;top:727.16px;width:381.00px;height:17.98px;background:#0077b6"></div>
<div style="left:160.50px;top:727.16px;width:1.00px;height:17.98px;background:#cfe3f2"></div>
<div class="t" style="left:38.00px;top:728.00px;line-height:20px;font-size:11.16px;color:#fff;font-weight:700;">Title 3</div>
<div class="t" style="left:505.20px;top:728.00px;line-height:20px;font-size:11.16px;color:#222;font-weight:400;transform:scaleX(1.290);transform-origin:0 50%;">11/07/2025</div>
<div class="t" style="left:593.30px;top:728.00px;line-height:20px;font-size:11.16px;color:#222;font-weight:400;transform:scaleX(1.271);transform-origin:0 50%;">13/08/2025</div>
<div style="left:792.50px;top:727.36px;width:70.50px;height:17.68px;background:#540d6e"></div>
<div class="t" style="left:795.00px;top:728.00px;line-height:20px;font-size:11.16px;color:#fff;font-weight:700;transform:scaleX(0.964);transform-origin:0 50%;">Not Started</div>
<div style="left:35.00px;top:745.84px;width:126.00px;height:19.28px;background:#caf0f8"></div>
<div style="left:161.00px;top:764.12px;width:255.00px;height:1.00px;background:#caf0f8"></div>
<div class="t" style="left:49.80px;top:747.28px;line-height:20px;font-size:11.16px;color:#222;font-weight:400;">Task 1</div>
<div class="t" style="left:505.20px;top:747.28px;line-height:20px;font-size:11.16px;color:#222;font-weight:400;transform:scaleX(1.271);transform-origin:0 50%;">02/07/2025</div>
<div class="t" style="left:593.30px;top:747.28px;line-height:20px;font-size:11.16px;color:#222;font-weight:400;transform:scaleX(1.271);transform-origin:0 50%;">28/08/2025</div>
<div style="left:792.50px;top:746.64px;width:70.50px;height:17.68px;background:#0ead69"></div>
<div class="t" style="left:795.00px;top:747.28px;line-height:20px;font-size:11.16px;color:#fff;font-weight:700;transform:scaleX(0.989);transform-origin:0 50%;">Completed</div>
<svg style="left:872px;top:749.6px" width="12.0" height="14.0" viewBox="0 0 12 14"><path fill-rule="evenodd" fill="#fdb515" d="M2.6 0H9.4L12 3.4 7.2 8.3V9.6L10 10.3V14H2V10.3L4.8 9.6V8.3L0 3.4ZM4.1 1.8H7.9L7.4 5.2 6 6.6 4.6 5.2ZM4.2 12a1.8 .75 0 1 0 3.6 0a1.8 .75 0 1 0-3.6 0Z"/></svg>
<div style="left:35.00px;top:765.12px;width:126.00px;height:19.28px;background:#caf0f8"></div>
<div style="left:161.00px;top:783.40px;width:255.00px;height:1.00px;background:#caf0f8"></div>
<div class="t" style="left:49.80px;top:766.56px;line-height:20px;font-size:11.16px;color:#222;font-weight:400;">Task 2</div>
<div class="t" style="left:505.20px;top:766.56px;line-height:20px;font-size:11.16px;color:#222;font-weight:400;transform:scaleX(1.271);transform-origin:0 50%;">03/07/2025</div>
<div class="t" style="left:593.30px;top:766.56px;line-height:20px;font-size:11.16px;color:#222;font-weight:400;transform:scaleX(1.271);transform-origin:0 50%;">16/08/2025</div>
<div style="left:792.50px;top:765.92px;width:70.50px;height:17.68px;background:#ffd23f"></div>
<div class="t" style="left:795.00px;top:766.56px;line-height:20px;font-size:11.16px;color:#111;font-weight:700;">In Progress</div>
<div style="left:35.00px;top:784.40px;width:126.00px;height:19.28px;background:#caf0f8"></div>
<div style="left:161.00px;top:802.68px;width:255.00px;height:1.00px;background:#caf0f8"></div>
<div class="t" style="left:49.80px;top:785.84px;line-height:20px;font-size:11.16px;color:#222;font-weight:400;">Task 3</div>
<div class="t" style="left:505.20px;top:785.84px;line-height:20px;font-size:11.16px;color:#222;font-weight:400;transform:scaleX(1.271);transform-origin:0 50%;">04/07/2025</div>
<div class="t" style="left:593.30px;top:785.84px;line-height:20px;font-size:11.16px;color:#222;font-weight:400;transform:scaleX(1.271);transform-origin:0 50%;">26/08/2025</div>
<div style="left:792.50px;top:785.20px;width:70.50px;height:17.68px;background:#ffd23f"></div>
<div class="t" style="left:795.00px;top:785.84px;line-height:20px;font-size:11.16px;color:#111;font-weight:700;">In Progress</div>
<svg style="left:872px;top:788.2px" width="12.0" height="14.0" viewBox="0 0 12 14"><path fill-rule="evenodd" fill="#fdb515" d="M2.6 0H9.4L12 3.4 7.2 8.3V9.6L10 10.3V14H2V10.3L4.8 9.6V8.3L0 3.4ZM4.1 1.8H7.9L7.4 5.2 6 6.6 4.6 5.2ZM4.2 12a1.8 .75 0 1 0 3.6 0a1.8 .75 0 1 0-3.6 0Z"/></svg>
<div style="left:35.00px;top:803.68px;width:126.00px;height:19.28px;background:#caf0f8"></div>
<div style="left:161.00px;top:821.96px;width:255.00px;height:1.00px;background:#caf0f8"></div>
<div class="t" style="left:49.80px;top:805.12px;line-height:20px;font-size:11.16px;color:#222;font-weight:400;">Task 4</div>
<div class="t" style="left:505.20px;top:805.12px;line-height:20px;font-size:11.16px;color:#222;font-weight:400;transform:scaleX(1.271);transform-origin:0 50%;">15/07/2025</div>
<div class="t" style="left:593.30px;top:805.12px;line-height:20px;font-size:11.16px;color:#222;font-weight:400;transform:scaleX(1.271);transform-origin:0 50%;">22/08/2025</div>
<div style="left:792.50px;top:804.48px;width:70.50px;height:17.68px;background:#540d6e"></div>
<div class="t" style="left:795.00px;top:805.12px;line-height:20px;font-size:11.16px;color:#fff;font-weight:700;transform:scaleX(0.964);transform-origin:0 50%;">Not Started</div>
<div style="left:35.00px;top:822.96px;width:126.00px;height:19.28px;background:#caf0f8"></div>
<div class="t" style="left:49.80px;top:824.40px;line-height:20px;font-size:11.16px;color:#222;font-weight:400;">Task 5</div>
<div class="t" style="left:505.20px;top:824.40px;line-height:20px;font-size:11.16px;color:#222;font-weight:400;transform:scaleX(1.271);transform-origin:0 50%;">14/07/2025</div>
<div class="t" style="left:593.30px;top:824.40px;line-height:20px;font-size:11.16px;color:#222;font-weight:400;transform:scaleX(1.271);transform-origin:0 50%;">20/08/2025</div>
<div style="left:792.50px;top:823.76px;width:70.50px;height:17.68px;background:#3bceac"></div>
<div class="t" style="left:795.00px;top:824.40px;line-height:20px;font-size:11.16px;color:#fff;font-weight:700;">Cancelled</div>
<div style="left:35.00px;top:842.84px;width:381.00px;height:17.98px;background:#0077b6"></div>
<div style="left:160.50px;top:842.84px;width:1.00px;height:17.98px;background:#cfe3f2"></div>
<div class="t" style="left:38.00px;top:843.68px;line-height:20px;font-size:11.16px;color:#fff;font-weight:700;">Ttile 4</div>
<div class="t" style="left:505.20px;top:843.68px;line-height:20px;font-size:11.16px;color:#222;font-weight:400;transform:scaleX(1.271);transform-origin:0 50%;">12/07/2025</div>
<div class="t" style="left:593.30px;top:843.68px;line-height:20px;font-size:11.16px;color:#222;font-weight:400;transform:scaleX(1.271);transform-origin:0 50%;">21/08/2025</div>
<div style="left:792.50px;top:843.04px;width:70.50px;height:17.68px;background:#3bceac"></div>
<div class="t" style="left:795.00px;top:843.68px;line-height:20px;font-size:11.16px;color:#fff;font-weight:700;">Cancelled</div>
<div style="left:35.00px;top:861.52px;width:126.00px;height:19.28px;background:#caf0f8"></div>
<div style="left:161.00px;top:879.80px;width:255.00px;height:1.00px;background:#caf0f8"></div>
<div class="t" style="left:49.80px;top:862.96px;line-height:20px;font-size:11.16px;color:#222;font-weight:400;">Task 1</div>
<div class="t" style="left:505.20px;top:862.96px;line-height:20px;font-size:11.16px;color:#222;font-weight:400;transform:scaleX(1.290);transform-origin:0 50%;">11/07/2025</div>
<div class="t" style="left:593.30px;top:862.96px;line-height:20px;font-size:11.16px;color:#222;font-weight:400;transform:scaleX(1.271);transform-origin:0 50%;">13/08/2025</div>
<div style="left:792.50px;top:862.32px;width:70.50px;height:17.68px;background:#ee4266"></div>
<div class="t" style="left:795.00px;top:862.96px;line-height:20px;font-size:11.16px;color:#fff;font-weight:700;transform:scaleX(1.037);transform-origin:0 50%;">On Hold</div>
<div style="left:35.00px;top:880.80px;width:126.00px;height:19.28px;background:#caf0f8"></div>
<div style="left:161.00px;top:899.08px;width:255.00px;height:1.00px;background:#caf0f8"></div>
<div class="t" style="left:49.80px;top:882.24px;line-height:20px;font-size:11.16px;color:#222;font-weight:400;">Task 2</div>
<div style="left:416.50px;top:881.60px;width:86.00px;height:17.68px;background:#f4d35e"></div>
<div class="t" style="left:419.00px;top:882.24px;line-height:20px;font-size:11.16px;color:#111;font-weight:700;transform:scaleX(0.973);transform-origin:0 50%;">Medium</div>
<div class="t" style="left:505.20px;top:882.24px;line-height:20px;font-size:11.16px;color:#222;font-weight:400;transform:scaleX(1.271);transform-origin:0 50%;">02/07/2025</div>
<div class="t" style="left:593.30px;top:882.24px;line-height:20px;font-size:11.16px;color:#222;font-weight:400;transform:scaleX(1.271);transform-origin:0 50%;">28/08/2025</div>
<div style="left:792.50px;top:881.60px;width:70.50px;height:17.68px;background:#ee4266"></div>
<div class="t" style="left:795.00px;top:882.24px;line-height:20px;font-size:11.16px;color:#fff;font-weight:700;transform:scaleX(1.037);transform-origin:0 50%;">On Hold</div>
<div style="left:35.00px;top:900.08px;width:126.00px;height:19.28px;background:#caf0f8"></div>
<div style="left:161.00px;top:918.36px;width:255.00px;height:1.00px;background:#caf0f8"></div>
<div class="t" style="left:49.80px;top:901.52px;line-height:20px;font-size:11.16px;color:#222;font-weight:400;">Task 3</div>
<div style="left:792.50px;top:900.88px;width:70.50px;height:17.68px;background:#3bceac"></div>
<div class="t" style="left:795.00px;top:901.52px;line-height:20px;font-size:11.16px;color:#fff;font-weight:700;">Cancelled</div>
<div style="left:35.00px;top:919.36px;width:126.00px;height:19.28px;background:#caf0f8"></div>
<div style="left:161.00px;top:937.64px;width:255.00px;height:1.00px;background:#caf0f8"></div>
<div class="t" style="left:49.80px;top:920.80px;line-height:20px;font-size:11.16px;color:#222;font-weight:400;">Task 4</div>
<div style="left:35.00px;top:938.64px;width:126.00px;height:19.28px;background:#caf0f8"></div>
<div style="left:161.00px;top:956.92px;width:255.00px;height:1.00px;background:#caf0f8"></div>
<div class="t" style="left:49.80px;top:940.08px;line-height:20px;font-size:11.16px;color:#222;font-weight:400;">Task 5</div>
<div style="left:35.00px;top:957.92px;width:126.00px;height:19.28px;background:#caf0f8"></div>
<div style="left:161.00px;top:976.20px;width:255.00px;height:1.00px;background:#caf0f8"></div>
<div style="left:416.50px;top:958.72px;width:86.00px;height:17.68px;background:#0d3b66"></div>
<div class="t" style="left:419.00px;top:959.36px;line-height:20px;font-size:11.16px;color:#fff;font-weight:700;transform:scaleX(0.946);transform-origin:0 50%;">Urgent</div>
<div style="left:35.00px;top:977.20px;width:126.00px;height:17.80px;background:#caf0f8"></div>
<div style="left:894.80px;top:372.60px;width:652.60px;height:33.40px;background:#efefef"></div>
<div style="left:934.00px;top:380.00px;width:9.30px;height:19.00px;background:#888"></div>
<div style="left:894.40px;top:408.50px;width:1029.10px;height:34.40px;background:#023e8a"></div>
<div class="t" style="left:942.97px;top:417.00px;line-height:20px;font-size:11.16px;color:#fff;font-weight:700;transform:scaleX(1.071);transform-origin:0 50%;">Thursday, 10 July 2025</div>
<div style="left:1121.05px;top:408.50px;width:1.00px;height:34.40px;background:#dfe8f5"></div>
<div class="t" style="left:1170.12px;top:417.00px;line-height:20px;font-size:11.16px;color:#fff;font-weight:700;transform:scaleX(1.071);transform-origin:0 50%;">Thursday, 17 July 2025</div>
<div style="left:1348.20px;top:408.50px;width:1.00px;height:34.40px;background:#dfe8f5"></div>
<div class="t" style="left:1397.28px;top:417.00px;line-height:20px;font-size:11.16px;color:#fff;font-weight:700;transform:scaleX(1.071);transform-origin:0 50%;">Thursday, 24 July 2025</div>
<div style="left:1575.35px;top:408.50px;width:1.00px;height:34.40px;background:#dfe8f5"></div>
<div class="t" style="left:1624.42px;top:417.00px;line-height:20px;font-size:11.16px;color:#fff;font-weight:700;transform:scaleX(1.071);transform-origin:0 50%;">Thursday, 31 July 2025</div>
<div style="left:1802.50px;top:408.50px;width:1.00px;height:34.40px;background:#dfe8f5"></div>
<div class="t" style="left:1843.58px;top:417.00px;line-height:20px;font-size:11.16px;color:#fff;font-weight:700;transform:scaleX(1.116);transform-origin:0 50%;">Thursday, 7 August 2025</div>
<div style="left:894.40px;top:442.60px;width:1029.10px;height:52.10px;background:#0077b6"></div>
<div style="left:893.70px;top:496.40px;width:747.05px;height:17.68px;background:#540d6e"></div>
<div style="left:1640.75px;top:496.40px;width:32.45px;height:17.68px;background:repeating-linear-gradient(135deg,#f07c7c 0px,#f07c7c 1.41px,#540d6e 1.41px,#540d6e 2.83px)"></div>
<div style="left:1673.20px;top:496.40px;width:250.30px;height:17.68px;background:repeating-linear-gradient(135deg,#99d98c 0px,#99d98c 1.41px,#8ddff5 1.41px,#8ddff5 2.83px)"></div>
<div style="left:893.70px;top:515.68px;width:747.05px;height:17.68px;background:#ee4266"></div>
<div style="left:1640.75px;top:515.68px;width:32.45px;height:17.68px;background:repeating-linear-gradient(135deg,#f07c7c 0px,#f07c7c 1.41px,#ee4266 1.41px,#ee4266 2.83px)"></div>
<div style="left:1673.20px;top:515.68px;width:250.30px;height:17.68px;background:repeating-linear-gradient(135deg,#99d98c 0px,#99d98c 1.41px,#8ddff5 1.41px,#8ddff5 2.83px)"></div>
<div style="left:1055.95px;top:534.96px;width:584.80px;height:17.68px;background:#3bceac"></div>
<div style="left:1640.75px;top:534.96px;width:32.45px;height:17.68px;background:repeating-linear-gradient(135deg,#f07c7c 0px,#f07c7c 1.41px,#3bceac 1.41px,#3bceac 2.83px)"></div>
<div style="left:1673.20px;top:534.96px;width:250.30px;height:17.68px;background:repeating-linear-gradient(135deg,#99d98c 0px,#99d98c 1.41px,#8ddff5 1.41px,#8ddff5 2.83px)"></div>
<div style="left:1023.50px;top:554.24px;width:617.25px;height:17.68px;background:#ffd23f"></div>
<div style="left:1640.75px;top:554.24px;width:32.45px;height:17.68px;background:repeating-linear-gradient(135deg,#f07c7c 0px,#f07c7c 1.41px,#ffd23f 1.41px,#ffd23f 2.83px)"></div>
<div style="left:1673.20px;top:554.24px;width:250.30px;height:17.68px;background:repeating-linear-gradient(135deg,#99d98c 0px,#99d98c 1.41px,#8ddff5 1.41px,#8ddff5 2.83px)"></div>
<div style="left:958.60px;top:573.52px;width:682.15px;height:17.68px;background:#0ead69"></div>
<div style="left:1640.75px;top:573.52px;width:32.45px;height:17.68px;background:repeating-linear-gradient(135deg,#f07c7c 0px,#f07c7c 1.41px,#0ead69 1.41px,#0ead69 2.83px)"></div>
<div style="left:1673.20px;top:573.52px;width:250.30px;height:17.68px;background:repeating-linear-gradient(135deg,#99d98c 0px,#99d98c 1.41px,#8ddff5 1.41px,#8ddff5 2.83px)"></div>
<div style="left:926.15px;top:592.80px;width:714.60px;height:17.68px;background:#ee4266"></div>
<div style="left:1640.75px;top:592.80px;width:32.45px;height:17.68px;background:repeating-linear-gradient(135deg,#f07c7c 0px,#f07c7c 1.41px,#ee4266 1.41px,#ee4266 2.83px)"></div>
<div style="left:1673.20px;top:592.80px;width:250.30px;height:17.68px;background:repeating-linear-gradient(135deg,#99d98c 0px,#99d98c 1.41px,#8ddff5 1.41px,#8ddff5 2.83px)"></div>
<div style="left:893.70px;top:612.08px;width:747.05px;height:17.68px;background:#ffd23f"></div>
<div style="left:1640.75px;top:612.08px;width:32.45px;height:17.68px;background:repeating-linear-gradient(135deg,#f07c7c 0px,#f07c7c 1.41px,#ffd23f 1.41px,#ffd23f 2.83px)"></div>
<div style="left:1673.20px;top:612.08px;width:250.30px;height:17.68px;background:repeating-linear-gradient(135deg,#99d98c 0px,#99d98c 1.41px,#8ddff5 1.41px,#8ddff5 2.83px)"></div>
<div style="left:893.70px;top:631.36px;width:747.05px;height:17.68px;background:#ee4266"></div>
<div style="left:1640.75px;top:631.36px;width:32.45px;height:17.68px;background:repeating-linear-gradient(135deg,#f07c7c 0px,#f07c7c 1.41px,#ee4266 1.41px,#ee4266 2.83px)"></div>
<div style="left:1673.20px;top:631.36px;width:250.30px;height:17.68px;background:repeating-linear-gradient(135deg,#99d98c 0px,#99d98c 1.41px,#8ddff5 1.41px,#8ddff5 2.83px)"></div>
<div style="left:893.70px;top:650.64px;width:747.05px;height:17.68px;background:#ffd23f"></div>
<div style="left:1640.75px;top:650.64px;width:32.45px;height:17.68px;background:repeating-linear-gradient(135deg,#f07c7c 0px,#f07c7c 1.41px,#ffd23f 1.41px,#ffd23f 2.83px)"></div>
<div style="left:1673.20px;top:650.64px;width:250.30px;height:17.68px;background:repeating-linear-gradient(135deg,#99d98c 0px,#99d98c 1.41px,#8ddff5 1.41px,#8ddff5 2.83px)"></div>
<div style="left:1055.95px;top:669.92px;width:584.80px;height:17.68px;background:#3bceac"></div>
<div style="left:1640.75px;top:669.92px;width:32.45px;height:17.68px;background:repeating-linear-gradient(135deg,#f07c7c 0px,#f07c7c 1.41px,#3bceac 1.41px,#3bceac 2.83px)"></div>
<div style="left:1673.20px;top:669.92px;width:250.30px;height:17.68px;background:repeating-linear-gradient(135deg,#99d98c 0px,#99d98c 1.41px,#8ddff5 1.41px,#8ddff5 2.83px)"></div>
<div style="left:1023.50px;top:689.20px;width:617.25px;height:17.68px;background:#540d6e"></div>
<div style="left:1640.75px;top:689.20px;width:32.45px;height:17.68px;background:repeating-linear-gradient(135deg,#f07c7c 0px,#f07c7c 1.41px,#540d6e 1.41px,#540d6e 2.83px)"></div>
<div style="left:1673.20px;top:689.20px;width:250.30px;height:17.68px;background:repeating-linear-gradient(135deg,#99d98c 0px,#99d98c 1.41px,#8ddff5 1.41px,#8ddff5 2.83px)"></div>
<div style="left:958.60px;top:708.48px;width:682.15px;height:17.68px;background:#ee4266"></div>
<div style="left:1640.75px;top:708.48px;width:32.45px;height:17.68px;background:repeating-linear-gradient(135deg,#f07c7c 0px,#f07c7c 1.41px,#ee4266 1.41px,#ee4266 2.83px)"></div>
<div style="left:1673.20px;top:708.48px;width:250.30px;height:17.68px;background:repeating-linear-gradient(135deg,#99d98c 0px,#99d98c 1.41px,#8ddff5 1.41px,#8ddff5 2.83px)"></div>
<div style="left:926.15px;top:727.76px;width:714.60px;height:17.68px;background:#540d6e"></div>
<div style="left:1640.75px;top:727.76px;width:32.45px;height:17.68px;background:repeating-linear-gradient(135deg,#f07c7c 0px,#f07c7c 1.41px,#540d6e 1.41px,#540d6e 2.83px)"></div>
<div style="left:1673.20px;top:727.76px;width:250.30px;height:17.68px;background:repeating-linear-gradient(135deg,#99d98c 0px,#99d98c 1.41px,#8ddff5 1.41px,#8ddff5 2.83px)"></div>
<div style="left:893.70px;top:747.04px;width:747.05px;height:17.68px;background:#0ead69"></div>
<div style="left:1640.75px;top:747.04px;width:32.45px;height:17.68px;background:repeating-linear-gradient(135deg,#f07c7c 0px,#f07c7c 1.41px,#0ead69 1.41px,#0ead69 2.83px)"></div>
<div style="left:1673.20px;top:747.04px;width:250.30px;height:17.68px;background:repeating-linear-gradient(135deg,#99d98c 0px,#99d98c 1.41px,#8ddff5 1.41px,#8ddff5 2.83px)"></div>
<div style="left:893.70px;top:766.32px;width:747.05px;height:17.68px;background:#ffd23f"></div>
<div style="left:1640.75px;top:766.32px;width:32.45px;height:17.68px;background:repeating-linear-gradient(135deg,#f07c7c 0px,#f07c7c 1.41px,#ffd23f 1.41px,#ffd23f 2.83px)"></div>
<div style="left:1673.20px;top:766.32px;width:250.30px;height:17.68px;background:repeating-linear-gradient(135deg,#99d98c 0px,#99d98c 1.41px,#8ddff5 1.41px,#8ddff5 2.83px)"></div>
<div style="left:893.70px;top:785.60px;width:747.05px;height:17.68px;background:#ffd23f"></div>
<div style="left:1640.75px;top:785.60px;width:32.45px;height:17.68px;background:repeating-linear-gradient(135deg,#f07c7c 0px,#f07c7c 1.41px,#ffd23f 1.41px,#ffd23f 2.83px)"></div>
<div style="left:1673.20px;top:785.60px;width:250.30px;height:17.68px;background:repeating-linear-gradient(135deg,#99d98c 0px,#99d98c 1.41px,#8ddff5 1.41px,#8ddff5 2.83px)"></div>
<div style="left:1055.95px;top:804.88px;width:584.80px;height:17.68px;background:#540d6e"></div>
<div style="left:1640.75px;top:804.88px;width:32.45px;height:17.68px;background:repeating-linear-gradient(135deg,#f07c7c 0px,#f07c7c 1.41px,#540d6e 1.41px,#540d6e 2.83px)"></div>
<div style="left:1673.20px;top:804.88px;width:250.30px;height:17.68px;background:repeating-linear-gradient(135deg,#99d98c 0px,#99d98c 1.41px,#8ddff5 1.41px,#8ddff5 2.83px)"></div>
<div style="left:1023.50px;top:824.16px;width:617.25px;height:17.68px;background:#3bceac"></div>
<div style="left:1640.75px;top:824.16px;width:32.45px;height:17.68px;background:repeating-linear-gradient(135deg,#f07c7c 0px,#f07c7c 1.41px,#3bceac 1.41px,#3bceac 2.83px)"></div>
<div style="left:1673.20px;top:824.16px;width:250.30px;height:17.68px;background:repeating-linear-gradient(135deg,#99d98c 0px,#99d98c 1.41px,#8ddff5 1.41px,#8ddff5 2.83px)"></div>
<div style="left:958.60px;top:843.44px;width:682.15px;height:17.68px;background:#3bceac"></div>
<div style="left:1640.75px;top:843.44px;width:32.45px;height:17.68px;background:repeating-linear-gradient(135deg,#f07c7c 0px,#f07c7c 1.41px,#3bceac 1.41px,#3bceac 2.83px)"></div>
<div style="left:1673.20px;top:843.44px;width:250.30px;height:17.68px;background:repeating-linear-gradient(135deg,#99d98c 0px,#99d98c 1.41px,#8ddff5 1.41px,#8ddff5 2.83px)"></div>
<div style="left:926.15px;top:862.72px;width:714.60px;height:17.68px;background:#ee4266"></div>
<div style="left:1640.75px;top:862.72px;width:32.45px;height:17.68px;background:repeating-linear-gradient(135deg,#f07c7c 0px,#f07c7c 1.41px,#ee4266 1.41px,#ee4266 2.83px)"></div>
<div style="left:1673.20px;top:862.72px;width:250.30px;height:17.68px;background:repeating-linear-gradient(135deg,#99d98c 0px,#99d98c 1.41px,#8ddff5 1.41px,#8ddff5 2.83px)"></div>
<div style="left:893.70px;top:882.00px;width:747.05px;height:17.68px;background:#ee4266"></div>
<div style="left:1640.75px;top:882.00px;width:32.45px;height:17.68px;background:repeating-linear-gradient(135deg,#f07c7c 0px,#f07c7c 1.41px,#ee4266 1.41px,#ee4266 2.83px)"></div>
<div style="left:1673.20px;top:882.00px;width:250.30px;height:17.68px;background:repeating-linear-gradient(135deg,#99d98c 0px,#99d98c 1.41px,#8ddff5 1.41px,#8ddff5 2.83px)"></div>
<div style="left:1640.75px;top:442.60px;width:32.45px;height:52.10px;background:repeating-linear-gradient(135deg,#f08080 0px,#f08080 1.41px,#c4f4f8 1.41px,#c4f4f8 2.83px)"></div>
<div style="left:1640.75px;top:900.68px;width:32.45px;height:18.08px;background:repeating-linear-gradient(135deg,#f08080 0px,#f08080 1.41px,#c4f4f8 1.41px,#c4f4f8 2.83px)"></div>
<div style="left:1640.75px;top:919.96px;width:32.45px;height:18.08px;background:repeating-linear-gradient(135deg,#f08080 0px,#f08080 1.41px,#c4f4f8 1.41px,#c4f4f8 2.83px)"></div>
<div style="left:1640.75px;top:939.24px;width:32.45px;height:18.08px;background:repeating-linear-gradient(135deg,#f08080 0px,#f08080 1.41px,#c4f4f8 1.41px,#c4f4f8 2.83px)"></div>
<div style="left:1640.75px;top:958.52px;width:32.45px;height:18.08px;background:repeating-linear-gradient(135deg,#f08080 0px,#f08080 1.41px,#c4f4f8 1.41px,#c4f4f8 2.83px)"></div>
<div style="left:1640.75px;top:977.80px;width:32.45px;height:17.20px;background:repeating-linear-gradient(135deg,#f08080 0px,#f08080 1.41px,#c4f4f8 1.41px,#c4f4f8 2.83px)"></div>
<div class="t" style="left:904.38px;top:442.50px;line-height:20px;font-size:11.16px;color:#fff;font-weight:700;">10</div>
<div class="t" style="left:900.62px;top:469.00px;line-height:20px;font-size:11.16px;color:#fff;font-weight:700;transform:scaleX(0.978);transform-origin:0 50%;">Thu</div>
<div class="t" style="left:936.83px;top:442.50px;line-height:20px;font-size:11.16px;color:#fff;font-weight:700;transform:scaleX(1.060);transform-origin:0 50%;">11</div>
<div class="t" style="left:935.83px;top:469.00px;line-height:20px;font-size:11.16px;color:#fff;font-weight:700;transform:scaleX(1.017);transform-origin:0 50%;">Fri</div>
<div class="t" style="left:969.27px;top:442.50px;line-height:20px;font-size:11.16px;color:#fff;font-weight:700;">12</div>
<div class="t" style="left:967.52px;top:469.00px;line-height:20px;font-size:11.16px;color:#fff;font-weight:700;transform:scaleX(0.921);transform-origin:0 50%;">Sat</div>
<div class="t" style="left:1001.73px;top:442.50px;line-height:20px;font-size:11.16px;color:#fff;font-weight:700;">13</div>
<div class="t" style="left:998.48px;top:469.00px;line-height:20px;font-size:11.16px;color:#fff;font-weight:700;transform:scaleX(0.901);transform-origin:0 50%;">Sun</div>
<div class="t" style="left:1034.17px;top:442.50px;line-height:20px;font-size:11.16px;color:#fff;font-weight:700;">14</div>
<div class="t" style="left:1028.92px;top:469.00px;line-height:20px;font-size:11.16px;color:#fff;font-weight:700;">Mon</div>
<div class="t" style="left:1066.62px;top:442.50px;line-height:20px;font-size:11.16px;color:#fff;font-weight:700;">15</div>
<div class="t" style="left:1063.12px;top:469.00px;line-height:20px;font-size:11.16px;color:#fff;font-weight:700;transform:scaleX(1.026);transform-origin:0 50%;">Tue</div>
<div class="t" style="left:1099.07px;top:442.50px;line-height:20px;font-size:11.16px;color:#fff;font-weight:700;">16</div>
<div class="t" style="left:1093.82px;top:469.00px;line-height:20px;font-size:11.16px;color:#fff;font-weight:700;transform:scaleX(0.985);transform-origin:0 50%;">Wed</div>
<div class="t" style="left:1131.52px;top:442.50px;line-height:20px;font-size:11.16px;color:#fff;font-weight:700;">17</div>
<div class="t" style="left:1127.77px;top:469.00px;line-height:20px;font-size:11.16px;color:#fff;font-weight:700;transform:scaleX(0.978);transform-origin:0 50%;">Thu</div>
<div class="t" style="left:1163.97px;top:442.50px;line-height:20px;font-size:11.16px;color:#fff;font-weight:700;">18</div>
<div class="t" style="left:1162.97px;top:469.00px;line-height:20px;font-size:11.16px;color:#fff;font-weight:700;transform:scaleX(1.017);transform-origin:0 50%;">Fri</div>
<div class="t" style="left:1196.42px;top:442.50px;line-height:20px;font-size:11.16px;color:#fff;font-weight:700;">19</div>
<div class="t" style="left:1194.67px;top:469.00px;line-height:20px;font-size:11.16px;color:#fff;font-weight:700;transform:scaleX(0.921);transform-origin:0 50%;">Sat</div>
<div class="t" style="left:1228.88px;top:442.50px;line-height:20px;font-size:11.16px;color:#fff;font-weight:700;">20</div>
<div class="t" style="left:1225.62px;top:469.00px;line-height:20px;font-size:11.16px;color:#fff;font-weight:700;transform:scaleX(0.901);transform-origin:0 50%;">Sun</div>
<div class="t" style="left:1261.32px;top:442.50px;line-height:20px;font-size:11.16px;color:#fff;font-weight:700;">21</div>
<div class="t" style="left:1256.07px;top:469.00px;line-height:20px;font-size:11.16px;color:#fff;font-weight:700;">Mon</div>
<div class="t" style="left:1293.77px;top:442.50px;line-height:20px;font-size:11.16px;color:#fff;font-weight:700;">22</div>
<div class="t" style="left:1290.27px;top:469.00px;line-height:20px;font-size:11.16px;color:#fff;font-weight:700;transform:scaleX(1.026);transform-origin:0 50%;">Tue</div>
<div class="t" style="left:1326.22px;top:442.50px;line-height:20px;font-size:11.16px;color:#fff;font-weight:700;">23</div>
<div class="t" style="left:1320.97px;top:469.00px;line-height:20px;font-size:11.16px;color:#fff;font-weight:700;transform:scaleX(0.985);transform-origin:0 50%;">Wed</div>
<div class="t" style="left:1358.67px;top:442.50px;line-height:20px;font-size:11.16px;color:#fff;font-weight:700;">24</div>
<div class="t" style="left:1354.92px;top:469.00px;line-height:20px;font-size:11.16px;color:#fff;font-weight:700;transform:scaleX(0.978);transform-origin:0 50%;">Thu</div>
<div class="t" style="left:1391.12px;top:442.50px;line-height:20px;font-size:11.16px;color:#fff;font-weight:700;">25</div>
<div class="t" style="left:1390.12px;top:469.00px;line-height:20px;font-size:11.16px;color:#fff;font-weight:700;transform:scaleX(1.017);transform-origin:0 50%;">Fri</div>
<div class="t" style="left:1423.57px;top:442.50px;line-height:20px;font-size:11.16px;color:#fff;font-weight:700;">26</div>
<div class="t" style="left:1421.82px;top:469.00px;line-height:20px;font-size:11.16px;color:#fff;font-weight:700;transform:scaleX(0.921);transform-origin:0 50%;">Sat</div>
<div class="t" style="left:1456.03px;top:442.50px;line-height:20px;font-size:11.16px;color:#fff;font-weight:700;">27</div>
<div class="t" style="left:1452.78px;top:469.00px;line-height:20px;font-size:11.16px;color:#fff;font-weight:700;transform:scaleX(0.901);transform-origin:0 50%;">Sun</div>
<div class="t" style="left:1488.47px;top:442.50px;line-height:20px;font-size:11.16px;color:#fff;font-weight:700;">28</div>
<div class="t" style="left:1483.22px;top:469.00px;line-height:20px;font-size:11.16px;color:#fff;font-weight:700;">Mon</div>
<div class="t" style="left:1520.92px;top:442.50px;line-height:20px;font-size:11.16px;color:#fff;font-weight:700;">29</div>
<div class="t" style="left:1517.42px;top:469.00px;line-height:20px;font-size:11.16px;color:#fff;font-weight:700;transform:scaleX(1.026);transform-origin:0 50%;">Tue</div>
<div class="t" style="left:1553.38px;top:442.50px;line-height:20px;font-size:11.16px;color:#fff;font-weight:700;">30</div>
<div class="t" style="left:1548.12px;top:469.00px;line-height:20px;font-size:11.16px;color:#fff;font-weight:700;transform:scaleX(0.985);transform-origin:0 50%;">Wed</div>
<div class="t" style="left:1585.82px;top:442.50px;line-height:20px;font-size:11.16px;color:#fff;font-weight:700;">31</div>
<div class="t" style="left:1582.07px;top:469.00px;line-height:20px;font-size:11.16px;color:#fff;font-weight:700;transform:scaleX(0.978);transform-origin:0 50%;">Thu</div>
<div class="t" style="left:1621.28px;top:442.50px;line-height:20px;font-size:11.16px;color:#fff;font-weight:700;transform:scaleX(1.047);transform-origin:0 50%;">1</div>
<div class="t" style="left:1617.28px;top:469.00px;line-height:20px;font-size:11.16px;color:#fff;font-weight:700;transform:scaleX(1.017);transform-origin:0 50%;">Fri</div>
<div class="t" style="left:1653.72px;top:442.50px;line-height:20px;font-size:11.16px;color:#111;font-weight:700;transform:scaleX(1.047);transform-origin:0 50%;">2</div>
<div class="t" style="left:1648.97px;top:469.00px;line-height:20px;font-size:11.16px;color:#111;font-weight:700;transform:scaleX(0.921);transform-origin:0 50%;">Sat</div>
<div class="t" style="left:1686.17px;top:442.50px;line-height:20px;font-size:11.16px;color:#fff;font-weight:700;transform:scaleX(1.047);transform-origin:0 50%;">3</div>
<div class="t" style="left:1679.92px;top:469.00px;line-height:20px;font-size:11.16px;color:#fff;font-weight:700;transform:scaleX(0.901);transform-origin:0 50%;">Sun</div>
<div class="t" style="left:1718.62px;top:442.50px;line-height:20px;font-size:11.16px;color:#fff;font-weight:700;transform:scaleX(1.047);transform-origin:0 50%;">4</div>
<div class="t" style="left:1710.38px;top:469.00px;line-height:20px;font-size:11.16px;color:#fff;font-weight:700;">Mon</div>
<div class="t" style="left:1751.07px;top:442.50px;line-height:20px;font-size:11.16px;color:#fff;font-weight:700;transform:scaleX(1.047);transform-origin:0 50%;">5</div>
<div class="t" style="left:1744.57px;top:469.00px;line-height:20px;font-size:11.16px;color:#fff;font-weight:700;transform:scaleX(1.026);transform-origin:0 50%;">Tue</div>
<div class="t" style="left:1783.53px;top:442.50px;line-height:20px;font-size:11.16px;color:#fff;font-weight:700;transform:scaleX(1.047);transform-origin:0 50%;">6</div>
<div class="t" style="left:1775.28px;top:469.00px;line-height:20px;font-size:11.16px;color:#fff;font-weight:700;transform:scaleX(0.985);transform-origin:0 50%;">Wed</div>
<div class="t" style="left:1815.97px;top:442.50px;line-height:20px;font-size:11.16px;color:#fff;font-weight:700;transform:scaleX(1.047);transform-origin:0 50%;">7</div>
<div class="t" style="left:1809.22px;top:469.00px;line-height:20px;font-size:11.16px;color:#fff;font-weight:700;transform:scaleX(0.978);transform-origin:0 50%;">Thu</div>
<div class="t" style="left:1848.42px;top:442.50px;line-height:20px;font-size:11.16px;color:#fff;font-weight:700;transform:scaleX(1.047);transform-origin:0 50%;">8</div>
<div class="t" style="left:1844.42px;top:469.00px;line-height:20px;font-size:11.16px;color:#fff;font-weight:700;transform:scaleX(1.017);transform-origin:0 50%;">Fri</div>
<div class="t" style="left:1880.88px;top:442.50px;line-height:20px;font-size:11.16px;color:#fff;font-weight:700;transform:scaleX(1.047);transform-origin:0 50%;">9</div>
<div class="t" style="left:1876.12px;top:469.00px;line-height:20px;font-size:11.16px;color:#fff;font-weight:700;transform:scaleX(0.921);transform-origin:0 50%;">Sat</div>
<div class="t" style="left:1910.32px;top:442.50px;line-height:20px;font-size:11.16px;color:#fff;font-weight:700;">10</div>
<div class="t" style="left:1907.07px;top:469.00px;line-height:20px;font-size:11.16px;color:#fff;font-weight:700;transform:scaleX(0.901);transform-origin:0 50%;">Sun</div>
<div style="left:1639.75px;top:442.60px;width:1.50px;height:552.40px;background:#111"></div>
<div style="left:1672.70px;top:442.60px;width:1.50px;height:552.40px;background:#111"></div>
<div style="left:1923.50px;top:206.00px;width:22.50px;height:789.00px;background:#e6e6e6"></div>
<div style="left:1923.50px;top:222.00px;width:1.00px;height:773.00px;background:#c6c6c6"></div>
<div style="left:1927.50px;top:207.50px;width:15.00px;height:788.00px;background:#fff;border:1px solid #c6c6c6;box-sizing:border-box"></div>
<div style="left:1927.50px;top:207.50px;width:15.00px;height:15.00px;background:#fff;border:1px solid #9b9b9b;box-sizing:border-box"></div>
<svg style="left:1931px;top:212px" width="8" height="5" viewBox="0 0 8 5"><path d="M0 5h8L4 0z" fill="#222"/></svg>
<div style="left:1929.00px;top:223.00px;width:12.00px;height:698.00px;background:#fff;border:1px solid #bdbdbd;box-sizing:border-box"></div>
<div style="left:1927.50px;top:980.00px;width:15.00px;height:15.00px;background:#fff;border:1px solid #9b9b9b;box-sizing:border-box"></div>
<svg style="left:1931px;top:985px" width="8" height="5" viewBox="0 0 8 5"><path d="M0 0h8L4 5z" fill="#222"/></svg>
<div style="left:0.00px;top:995.00px;width:1946.00px;height:28.00px;background:#e6e6e6"></div>
<div style="left:0.00px;top:995.00px;width:1946.00px;height:1.00px;background:#c6c6c6"></div>
<svg style="left:26px;top:1005px" width="6" height="9" viewBox="0 0 6 9"><path d="M5 0.5L1 4.5 5 8.5" fill="none" stroke="#b5b5b5" stroke-width="1.2"/></svg>
<svg style="left:56px;top:1005px" width="6" height="9" viewBox="0 0 6 9"><path d="M1 0.5L5 4.5 1 8.5" fill="none" stroke="#b5b5b5" stroke-width="1.2"/></svg>
<div style="left:101.50px;top:995.00px;width:144.00px;height:25.00px;background:linear-gradient(#ffffff 20%,#d3e5ea);border-left:1px solid #c6c6c6;border-right:1px solid #c6c6c6;box-sizing:border-box"></div>
<div style="left:101.50px;top:1018.50px;width:144.00px;height:2.00px;background:#217346"></div>
<div class="t" style="left:113.00px;top:998.50px;line-height:20px;font-size:13.0px;color:#217346;font-weight:700;">Project Gantt Chart</div>
<svg style="left:277px;top:1000px" width="18" height="18" viewBox="0 0 18 18"><circle cx="9" cy="9" r="7.8" fill="none" stroke="#666" stroke-width="1.1"/><path d="M9 4.5v9M4.5 9h9" stroke="#555" stroke-width="1.2"/></svg>
<div style="left:1167.50px;top:1005.00px;width:1.50px;height:1.50px;background:#999"></div>
<div style="left:1167.50px;top:1009.00px;width:1.50px;height:1.50px;background:#999"></div>
<div style="left:1167.50px;top:1013.00px;width:1.50px;height:1.50px;background:#999"></div>
<div style="left:1184.80px;top:1002.00px;width:739.50px;height:15.00px;background:#e6e6e6;border:1px solid #b8b8b8;box-sizing:border-box"></div>
<div style="left:1200.00px;top:1003.00px;width:667.00px;height:13.00px;background:#fff;border:1px solid #c6c6c6;box-sizing:border-box"></div>
<svg style="left:1189px;top:1005px" width="6" height="9" viewBox="0 0 6 9"><path d="M6 0v9L0 4.5z" fill="#222"/></svg>
<div style="left:1909.00px;top:1002.00px;width:15.00px;height:15.00px;background:#fff;border:1px solid #9b9b9b;box-sizing:border-box"></div>
<svg style="left:1914px;top:1005px" width="6" height="9" viewBox="0 0 6 9"><path d="M0 0v9L6 4.5z" fill="#222"/></svg>
<div style="left:0.00px;top:1023.00px;width:1946.00px;height:23.00px;background:#f3f3f3"></div>
<div style="left:0.00px;top:1022.50px;width:1946.00px;height:1.00px;background:#d6d6d6"></div>
<div class="t" style="left:11.00px;top:1026.00px;line-height:20px;font-size:12.0px;color:#444;font-weight:400;transform:scaleX(0.923);transform-origin:0 50%;">Ready</div>
<svg style="left:62px;top:1027px" width="15" height="15" viewBox="0 0 15 15"><circle cx="3" cy="3" r="2.5" fill="#555"/><rect x="6" y="1" width="8" height="3" fill="#555"/><rect x="1" y="6.5" width="13" height="8" fill="none" stroke="#777"/><path d="M5 6.5v8M9.5 6.5v8M1 10.5h13" stroke="#999"/></svg>
<svg style="left:92px;top:1026px" width="18" height="18" viewBox="0 0 18 18"><path d="M6 3.5a6 6 0 1 0 7 6.5" fill="none" stroke="#444" stroke-width="1.3" stroke-dasharray="2 1.5"/><path d="M8 1v6l4 3" fill="none" stroke="#444" stroke-width="1.3"/><path d="M10 11l6 6M16 11l-6 6" stroke="#333" stroke-width="1.5"/></svg>
<div class="t" style="left:113.00px;top:1024.50px;line-height:20px;font-size:12.0px;color:#222;font-weight:700;transform:scaleX(0.893);transform-origin:0 50%;font-weight:600">Accessibility: Investigate</div>
<div style="left:1648.00px;top:1024.00px;width:40.00px;height:22.00px;background:#c8c8c8"></div>
<svg style="left:1660px;top:1028px" width="15" height="14" viewBox="0 0 15 14"><rect x="0.5" y="0.5" width="14" height="13" fill="none" stroke="#555"/><path d="M5 0.5v13M10 0.5v13M0.5 5h14M0.5 9h14" stroke="#555"/></svg>
<svg style="left:1700px;top:1027px" width="16" height="15" viewBox="0 0 16 15"><rect x="0.5" y="0.5" width="15" height="14" fill="none" stroke="#777"/><rect x="3.5" y="3" width="9" height="9" fill="none" stroke="#777"/><path d="M5 5.5h6M5 7.5h6M5 9.5h6" stroke="#999"/></svg>
<svg style="left:1741px;top:1027px" width="16" height="15" viewBox="0 0 16 15"><path d="M0.5 14.5V0.5h15v14M5.5 0.5v7h5v-7" fill="none" stroke="#777"/></svg>
<div style="left:1775.00px;top:1034.00px;width:9.00px;height:1.20px;background:#555"></div>
<div style="left:1789.00px;top:1034.50px;width:100.00px;height:1.00px;background:#777"></div>
<div style="left:1834.00px;top:1029.00px;width:5.00px;height:12.00px;background:#444"></div>
<div style="left:1893.50px;top:1034.00px;width:9.00px;height:1.20px;background:#555"></div>
<div style="left:1897.50px;top:1030.00px;width:1.20px;height:9.00px;background:#555"></div>
<div class="t" style="left:1916.00px;top:1024.50px;line-height:20px;font-size:12.0px;color:#444;font-weight:400;transform:scaleX(0.916);transform-origin:0 50%;">90%</div>
</body></html>
